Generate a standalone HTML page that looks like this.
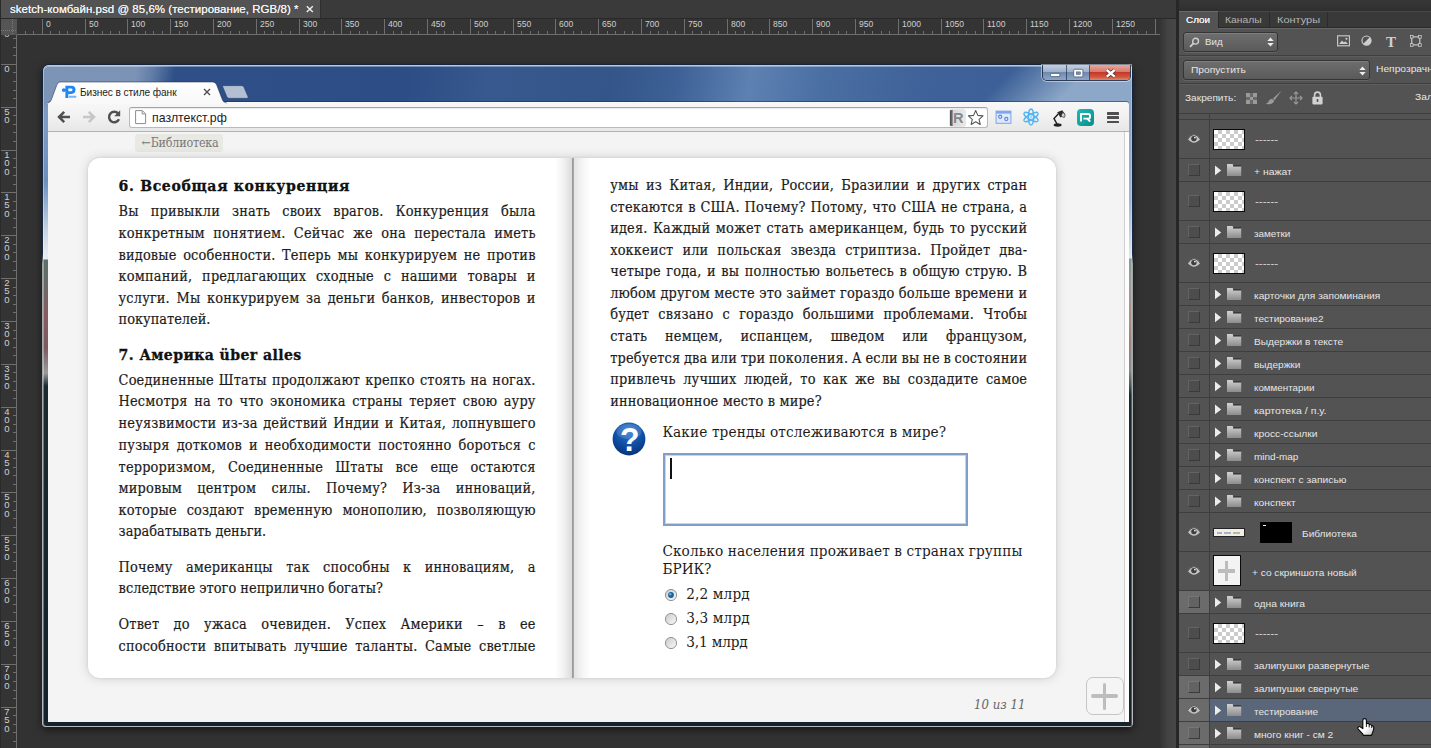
<!DOCTYPE html>
<html lang="ru"><head><meta charset="utf-8"><title>sketch-комбайн.psd</title>
<style>
html,body{margin:0;padding:0}
body{width:1431px;height:748px;overflow:hidden;position:relative;background:#323232;font-family:'Liberation Sans','DejaVu Sans',sans-serif;font-size:11px;color:#e6e6e6;-webkit-font-smoothing:antialiased}
.a{position:absolute}
.t{position:absolute;white-space:pre;line-height:1}
svg{position:absolute;overflow:visible}
</style></head><body>
<div class="a" style="left:0px;top:0px;width:1176px;height:18px;background:#3a3a3a"></div>
<div class="a" style="left:1px;top:0px;width:319px;height:18px;background:#535353"></div>
<div class="a" style="left:320px;top:0px;width:1px;height:18px;background:#2e2e2e"></div>
<div class="a" style="left:0px;top:18px;width:1176px;height:1px;background:#292929"></div>
<div class="t" style="left:10.00px;top:4.00px;font-family:'Liberation Sans','DejaVu Sans',sans-serif;font-size:11.5px;color:#f2f2f2;letter-spacing:0.029px;text-shadow:0 0 0.6px #f2f2f2;">sketch-комбайн.psd @ 85,6% (тестирование, RGB/8) *</div>
<svg style="left:305px;top:4px" width="10" height="10" viewBox="0 0 10 10"><path d="M1.8 2.2 L7.8 8 M7.8 2.2 L1.8 8" stroke="#f0f0f0" stroke-width="1.4" fill="none"/></svg>
<div class="a" style="left:0px;top:19px;width:1160px;height:16px;background:#343434"></div>
<div class="a" style="left:0px;top:35px;width:17px;height:713px;background:#343434"></div>
<div class="a" style="left:0px;top:0px;width:1px;height:748px;background:#2a2a2a"></div>
<div class="a" style="left:1px;top:19px;width:16px;height:16px;background:#555555"></div>
<svg style="left:1px;top:19px" width="16" height="16" viewBox="0 0 16 16"><path d="M11.5 0 V16 M0 11.5 H16" stroke="#7a7a7a" stroke-width="1" stroke-dasharray="1 1" fill="none"/></svg>
<svg style="left:0;top:19px" width="1160" height="16" viewBox="0 0 1160 16" shape-rendering="crispEdges"><rect x="17" y="15" width="1143" height="1" fill="#6f6f6f"/><rect x="25" y="12" width="1" height="4" fill="#6f6f6f"/><rect x="33" y="12" width="1" height="4" fill="#6f6f6f"/><rect x="42" y="0" width="1" height="16" fill="#6f6f6f"/><rect x="50" y="12" width="1" height="4" fill="#6f6f6f"/><rect x="59" y="12" width="1" height="4" fill="#6f6f6f"/><rect x="67" y="12" width="1" height="4" fill="#6f6f6f"/><rect x="76" y="12" width="1" height="4" fill="#6f6f6f"/><rect x="85" y="0" width="1" height="16" fill="#6f6f6f"/><rect x="93" y="12" width="1" height="4" fill="#6f6f6f"/><rect x="102" y="12" width="1" height="4" fill="#6f6f6f"/><rect x="110" y="12" width="1" height="4" fill="#6f6f6f"/><rect x="119" y="12" width="1" height="4" fill="#6f6f6f"/><rect x="127" y="0" width="1" height="16" fill="#6f6f6f"/><rect x="136" y="12" width="1" height="4" fill="#6f6f6f"/><rect x="145" y="12" width="1" height="4" fill="#6f6f6f"/><rect x="153" y="12" width="1" height="4" fill="#6f6f6f"/><rect x="162" y="12" width="1" height="4" fill="#6f6f6f"/><rect x="170" y="0" width="1" height="16" fill="#6f6f6f"/><rect x="179" y="12" width="1" height="4" fill="#6f6f6f"/><rect x="187" y="12" width="1" height="4" fill="#6f6f6f"/><rect x="196" y="12" width="1" height="4" fill="#6f6f6f"/><rect x="204" y="12" width="1" height="4" fill="#6f6f6f"/><rect x="213" y="0" width="1" height="16" fill="#6f6f6f"/><rect x="222" y="12" width="1" height="4" fill="#6f6f6f"/><rect x="230" y="12" width="1" height="4" fill="#6f6f6f"/><rect x="239" y="12" width="1" height="4" fill="#6f6f6f"/><rect x="247" y="12" width="1" height="4" fill="#6f6f6f"/><rect x="256" y="0" width="1" height="16" fill="#6f6f6f"/><rect x="264" y="12" width="1" height="4" fill="#6f6f6f"/><rect x="273" y="12" width="1" height="4" fill="#6f6f6f"/><rect x="281" y="12" width="1" height="4" fill="#6f6f6f"/><rect x="290" y="12" width="1" height="4" fill="#6f6f6f"/><rect x="299" y="0" width="1" height="16" fill="#6f6f6f"/><rect x="307" y="12" width="1" height="4" fill="#6f6f6f"/><rect x="316" y="12" width="1" height="4" fill="#6f6f6f"/><rect x="324" y="12" width="1" height="4" fill="#6f6f6f"/><rect x="333" y="12" width="1" height="4" fill="#6f6f6f"/><rect x="341" y="0" width="1" height="16" fill="#6f6f6f"/><rect x="350" y="12" width="1" height="4" fill="#6f6f6f"/><rect x="359" y="12" width="1" height="4" fill="#6f6f6f"/><rect x="367" y="12" width="1" height="4" fill="#6f6f6f"/><rect x="376" y="12" width="1" height="4" fill="#6f6f6f"/><rect x="384" y="0" width="1" height="16" fill="#6f6f6f"/><rect x="393" y="12" width="1" height="4" fill="#6f6f6f"/><rect x="401" y="12" width="1" height="4" fill="#6f6f6f"/><rect x="410" y="12" width="1" height="4" fill="#6f6f6f"/><rect x="418" y="12" width="1" height="4" fill="#6f6f6f"/><rect x="427" y="0" width="1" height="16" fill="#6f6f6f"/><rect x="436" y="12" width="1" height="4" fill="#6f6f6f"/><rect x="444" y="12" width="1" height="4" fill="#6f6f6f"/><rect x="453" y="12" width="1" height="4" fill="#6f6f6f"/><rect x="461" y="12" width="1" height="4" fill="#6f6f6f"/><rect x="470" y="0" width="1" height="16" fill="#6f6f6f"/><rect x="478" y="12" width="1" height="4" fill="#6f6f6f"/><rect x="487" y="12" width="1" height="4" fill="#6f6f6f"/><rect x="495" y="12" width="1" height="4" fill="#6f6f6f"/><rect x="504" y="12" width="1" height="4" fill="#6f6f6f"/><rect x="513" y="0" width="1" height="16" fill="#6f6f6f"/><rect x="521" y="12" width="1" height="4" fill="#6f6f6f"/><rect x="530" y="12" width="1" height="4" fill="#6f6f6f"/><rect x="538" y="12" width="1" height="4" fill="#6f6f6f"/><rect x="547" y="12" width="1" height="4" fill="#6f6f6f"/><rect x="555" y="0" width="1" height="16" fill="#6f6f6f"/><rect x="564" y="12" width="1" height="4" fill="#6f6f6f"/><rect x="573" y="12" width="1" height="4" fill="#6f6f6f"/><rect x="581" y="12" width="1" height="4" fill="#6f6f6f"/><rect x="590" y="12" width="1" height="4" fill="#6f6f6f"/><rect x="598" y="0" width="1" height="16" fill="#6f6f6f"/><rect x="607" y="12" width="1" height="4" fill="#6f6f6f"/><rect x="615" y="12" width="1" height="4" fill="#6f6f6f"/><rect x="624" y="12" width="1" height="4" fill="#6f6f6f"/><rect x="632" y="12" width="1" height="4" fill="#6f6f6f"/><rect x="641" y="0" width="1" height="16" fill="#6f6f6f"/><rect x="650" y="12" width="1" height="4" fill="#6f6f6f"/><rect x="658" y="12" width="1" height="4" fill="#6f6f6f"/><rect x="667" y="12" width="1" height="4" fill="#6f6f6f"/><rect x="675" y="12" width="1" height="4" fill="#6f6f6f"/><rect x="684" y="0" width="1" height="16" fill="#6f6f6f"/><rect x="692" y="12" width="1" height="4" fill="#6f6f6f"/><rect x="701" y="12" width="1" height="4" fill="#6f6f6f"/><rect x="709" y="12" width="1" height="4" fill="#6f6f6f"/><rect x="718" y="12" width="1" height="4" fill="#6f6f6f"/><rect x="727" y="0" width="1" height="16" fill="#6f6f6f"/><rect x="735" y="12" width="1" height="4" fill="#6f6f6f"/><rect x="744" y="12" width="1" height="4" fill="#6f6f6f"/><rect x="752" y="12" width="1" height="4" fill="#6f6f6f"/><rect x="761" y="12" width="1" height="4" fill="#6f6f6f"/><rect x="769" y="0" width="1" height="16" fill="#6f6f6f"/><rect x="778" y="12" width="1" height="4" fill="#6f6f6f"/><rect x="787" y="12" width="1" height="4" fill="#6f6f6f"/><rect x="795" y="12" width="1" height="4" fill="#6f6f6f"/><rect x="804" y="12" width="1" height="4" fill="#6f6f6f"/><rect x="812" y="0" width="1" height="16" fill="#6f6f6f"/><rect x="821" y="12" width="1" height="4" fill="#6f6f6f"/><rect x="829" y="12" width="1" height="4" fill="#6f6f6f"/><rect x="838" y="12" width="1" height="4" fill="#6f6f6f"/><rect x="846" y="12" width="1" height="4" fill="#6f6f6f"/><rect x="855" y="0" width="1" height="16" fill="#6f6f6f"/><rect x="864" y="12" width="1" height="4" fill="#6f6f6f"/><rect x="872" y="12" width="1" height="4" fill="#6f6f6f"/><rect x="881" y="12" width="1" height="4" fill="#6f6f6f"/><rect x="889" y="12" width="1" height="4" fill="#6f6f6f"/><rect x="898" y="0" width="1" height="16" fill="#6f6f6f"/><rect x="906" y="12" width="1" height="4" fill="#6f6f6f"/><rect x="915" y="12" width="1" height="4" fill="#6f6f6f"/><rect x="923" y="12" width="1" height="4" fill="#6f6f6f"/><rect x="932" y="12" width="1" height="4" fill="#6f6f6f"/><rect x="941" y="0" width="1" height="16" fill="#6f6f6f"/><rect x="949" y="12" width="1" height="4" fill="#6f6f6f"/><rect x="958" y="12" width="1" height="4" fill="#6f6f6f"/><rect x="966" y="12" width="1" height="4" fill="#6f6f6f"/><rect x="975" y="12" width="1" height="4" fill="#6f6f6f"/><rect x="983" y="0" width="1" height="16" fill="#6f6f6f"/><rect x="992" y="12" width="1" height="4" fill="#6f6f6f"/><rect x="1001" y="12" width="1" height="4" fill="#6f6f6f"/><rect x="1009" y="12" width="1" height="4" fill="#6f6f6f"/><rect x="1018" y="12" width="1" height="4" fill="#6f6f6f"/><rect x="1026" y="0" width="1" height="16" fill="#6f6f6f"/><rect x="1035" y="12" width="1" height="4" fill="#6f6f6f"/><rect x="1043" y="12" width="1" height="4" fill="#6f6f6f"/><rect x="1052" y="12" width="1" height="4" fill="#6f6f6f"/><rect x="1060" y="12" width="1" height="4" fill="#6f6f6f"/><rect x="1069" y="0" width="1" height="16" fill="#6f6f6f"/><rect x="1078" y="12" width="1" height="4" fill="#6f6f6f"/><rect x="1086" y="12" width="1" height="4" fill="#6f6f6f"/><rect x="1095" y="12" width="1" height="4" fill="#6f6f6f"/><rect x="1103" y="12" width="1" height="4" fill="#6f6f6f"/><rect x="1112" y="0" width="1" height="16" fill="#6f6f6f"/><rect x="1120" y="12" width="1" height="4" fill="#6f6f6f"/><rect x="1129" y="12" width="1" height="4" fill="#6f6f6f"/><rect x="1137" y="12" width="1" height="4" fill="#6f6f6f"/><rect x="1146" y="12" width="1" height="4" fill="#6f6f6f"/><rect x="1155" y="0" width="1" height="16" fill="#6f6f6f"/></svg>
<div class="t" style="left:45.60px;top:19.00px;font-family:'Liberation Sans','DejaVu Sans',sans-serif;font-size:9.5px;color:#cfcfcf;transform-origin:0 0;transform:scaleX(0.9000);">0</div>
<div class="t" style="left:88.60px;top:19.00px;font-family:'Liberation Sans','DejaVu Sans',sans-serif;font-size:9.5px;color:#cfcfcf;transform-origin:0 0;transform:scaleX(0.9000);">50</div>
<div class="t" style="left:130.60px;top:19.00px;font-family:'Liberation Sans','DejaVu Sans',sans-serif;font-size:9.5px;color:#cfcfcf;transform-origin:0 0;transform:scaleX(0.9000);">100</div>
<div class="t" style="left:173.60px;top:19.00px;font-family:'Liberation Sans','DejaVu Sans',sans-serif;font-size:9.5px;color:#cfcfcf;transform-origin:0 0;transform:scaleX(0.9000);">150</div>
<div class="t" style="left:216.60px;top:19.00px;font-family:'Liberation Sans','DejaVu Sans',sans-serif;font-size:9.5px;color:#cfcfcf;transform-origin:0 0;transform:scaleX(0.9000);">200</div>
<div class="t" style="left:259.60px;top:19.00px;font-family:'Liberation Sans','DejaVu Sans',sans-serif;font-size:9.5px;color:#cfcfcf;transform-origin:0 0;transform:scaleX(0.9000);">250</div>
<div class="t" style="left:302.60px;top:19.00px;font-family:'Liberation Sans','DejaVu Sans',sans-serif;font-size:9.5px;color:#cfcfcf;transform-origin:0 0;transform:scaleX(0.9000);">300</div>
<div class="t" style="left:344.60px;top:19.00px;font-family:'Liberation Sans','DejaVu Sans',sans-serif;font-size:9.5px;color:#cfcfcf;transform-origin:0 0;transform:scaleX(0.9000);">350</div>
<div class="t" style="left:387.60px;top:19.00px;font-family:'Liberation Sans','DejaVu Sans',sans-serif;font-size:9.5px;color:#cfcfcf;transform-origin:0 0;transform:scaleX(0.9000);">400</div>
<div class="t" style="left:430.60px;top:19.00px;font-family:'Liberation Sans','DejaVu Sans',sans-serif;font-size:9.5px;color:#cfcfcf;transform-origin:0 0;transform:scaleX(0.9000);">450</div>
<div class="t" style="left:473.60px;top:19.00px;font-family:'Liberation Sans','DejaVu Sans',sans-serif;font-size:9.5px;color:#cfcfcf;transform-origin:0 0;transform:scaleX(0.9000);">500</div>
<div class="t" style="left:516.60px;top:19.00px;font-family:'Liberation Sans','DejaVu Sans',sans-serif;font-size:9.5px;color:#cfcfcf;transform-origin:0 0;transform:scaleX(0.9000);">550</div>
<div class="t" style="left:558.60px;top:19.00px;font-family:'Liberation Sans','DejaVu Sans',sans-serif;font-size:9.5px;color:#cfcfcf;transform-origin:0 0;transform:scaleX(0.9000);">600</div>
<div class="t" style="left:601.60px;top:19.00px;font-family:'Liberation Sans','DejaVu Sans',sans-serif;font-size:9.5px;color:#cfcfcf;transform-origin:0 0;transform:scaleX(0.9000);">650</div>
<div class="t" style="left:644.60px;top:19.00px;font-family:'Liberation Sans','DejaVu Sans',sans-serif;font-size:9.5px;color:#cfcfcf;transform-origin:0 0;transform:scaleX(0.9000);">700</div>
<div class="t" style="left:687.60px;top:19.00px;font-family:'Liberation Sans','DejaVu Sans',sans-serif;font-size:9.5px;color:#cfcfcf;transform-origin:0 0;transform:scaleX(0.9000);">750</div>
<div class="t" style="left:730.60px;top:19.00px;font-family:'Liberation Sans','DejaVu Sans',sans-serif;font-size:9.5px;color:#cfcfcf;transform-origin:0 0;transform:scaleX(0.9000);">800</div>
<div class="t" style="left:772.60px;top:19.00px;font-family:'Liberation Sans','DejaVu Sans',sans-serif;font-size:9.5px;color:#cfcfcf;transform-origin:0 0;transform:scaleX(0.9000);">850</div>
<div class="t" style="left:815.60px;top:19.00px;font-family:'Liberation Sans','DejaVu Sans',sans-serif;font-size:9.5px;color:#cfcfcf;transform-origin:0 0;transform:scaleX(0.9000);">900</div>
<div class="t" style="left:858.60px;top:19.00px;font-family:'Liberation Sans','DejaVu Sans',sans-serif;font-size:9.5px;color:#cfcfcf;transform-origin:0 0;transform:scaleX(0.9000);">950</div>
<div class="t" style="left:901.60px;top:19.00px;font-family:'Liberation Sans','DejaVu Sans',sans-serif;font-size:9.5px;color:#cfcfcf;transform-origin:0 0;transform:scaleX(0.9000);">1000</div>
<div class="t" style="left:944.60px;top:19.00px;font-family:'Liberation Sans','DejaVu Sans',sans-serif;font-size:9.5px;color:#cfcfcf;transform-origin:0 0;transform:scaleX(0.9000);">1050</div>
<div class="t" style="left:986.60px;top:19.00px;font-family:'Liberation Sans','DejaVu Sans',sans-serif;font-size:9.5px;color:#cfcfcf;transform-origin:0 0;transform:scaleX(0.9000);">1100</div>
<div class="t" style="left:1029.60px;top:19.00px;font-family:'Liberation Sans','DejaVu Sans',sans-serif;font-size:9.5px;color:#cfcfcf;transform-origin:0 0;transform:scaleX(0.9000);">1150</div>
<div class="t" style="left:1072.60px;top:19.00px;font-family:'Liberation Sans','DejaVu Sans',sans-serif;font-size:9.5px;color:#cfcfcf;transform-origin:0 0;transform:scaleX(0.9000);">1200</div>
<div class="t" style="left:1115.60px;top:19.00px;font-family:'Liberation Sans','DejaVu Sans',sans-serif;font-size:9.5px;color:#cfcfcf;transform-origin:0 0;transform:scaleX(0.9000);">1250</div>
<svg style="left:0;top:35px" width="17" height="713" viewBox="0 0 17 713" shape-rendering="crispEdges"><rect x="16" y="0" width="1" height="713" fill="#6f6f6f"/><rect x="13" y="3" width="4" height="1" fill="#6f6f6f"/><rect x="13" y="12" width="4" height="1" fill="#6f6f6f"/><rect x="13" y="20" width="4" height="1" fill="#6f6f6f"/><rect x="1" y="29" width="16" height="1" fill="#6f6f6f"/><rect x="13" y="37" width="4" height="1" fill="#6f6f6f"/><rect x="13" y="46" width="4" height="1" fill="#6f6f6f"/><rect x="13" y="55" width="4" height="1" fill="#6f6f6f"/><rect x="13" y="63" width="4" height="1" fill="#6f6f6f"/><rect x="1" y="72" width="16" height="1" fill="#6f6f6f"/><rect x="13" y="80" width="4" height="1" fill="#6f6f6f"/><rect x="13" y="89" width="4" height="1" fill="#6f6f6f"/><rect x="13" y="97" width="4" height="1" fill="#6f6f6f"/><rect x="13" y="106" width="4" height="1" fill="#6f6f6f"/><rect x="1" y="115" width="16" height="1" fill="#6f6f6f"/><rect x="13" y="123" width="4" height="1" fill="#6f6f6f"/><rect x="13" y="132" width="4" height="1" fill="#6f6f6f"/><rect x="13" y="140" width="4" height="1" fill="#6f6f6f"/><rect x="13" y="149" width="4" height="1" fill="#6f6f6f"/><rect x="1" y="157" width="16" height="1" fill="#6f6f6f"/><rect x="13" y="166" width="4" height="1" fill="#6f6f6f"/><rect x="13" y="175" width="4" height="1" fill="#6f6f6f"/><rect x="13" y="183" width="4" height="1" fill="#6f6f6f"/><rect x="13" y="192" width="4" height="1" fill="#6f6f6f"/><rect x="1" y="200" width="16" height="1" fill="#6f6f6f"/><rect x="13" y="209" width="4" height="1" fill="#6f6f6f"/><rect x="13" y="217" width="4" height="1" fill="#6f6f6f"/><rect x="13" y="226" width="4" height="1" fill="#6f6f6f"/><rect x="13" y="235" width="4" height="1" fill="#6f6f6f"/><rect x="1" y="243" width="16" height="1" fill="#6f6f6f"/><rect x="13" y="252" width="4" height="1" fill="#6f6f6f"/><rect x="13" y="260" width="4" height="1" fill="#6f6f6f"/><rect x="13" y="269" width="4" height="1" fill="#6f6f6f"/><rect x="13" y="277" width="4" height="1" fill="#6f6f6f"/><rect x="1" y="286" width="16" height="1" fill="#6f6f6f"/><rect x="13" y="295" width="4" height="1" fill="#6f6f6f"/><rect x="13" y="303" width="4" height="1" fill="#6f6f6f"/><rect x="13" y="312" width="4" height="1" fill="#6f6f6f"/><rect x="13" y="320" width="4" height="1" fill="#6f6f6f"/><rect x="1" y="329" width="16" height="1" fill="#6f6f6f"/><rect x="13" y="337" width="4" height="1" fill="#6f6f6f"/><rect x="13" y="346" width="4" height="1" fill="#6f6f6f"/><rect x="13" y="355" width="4" height="1" fill="#6f6f6f"/><rect x="13" y="363" width="4" height="1" fill="#6f6f6f"/><rect x="1" y="372" width="16" height="1" fill="#6f6f6f"/><rect x="13" y="380" width="4" height="1" fill="#6f6f6f"/><rect x="13" y="389" width="4" height="1" fill="#6f6f6f"/><rect x="13" y="397" width="4" height="1" fill="#6f6f6f"/><rect x="13" y="406" width="4" height="1" fill="#6f6f6f"/><rect x="1" y="415" width="16" height="1" fill="#6f6f6f"/><rect x="13" y="423" width="4" height="1" fill="#6f6f6f"/><rect x="13" y="432" width="4" height="1" fill="#6f6f6f"/><rect x="13" y="440" width="4" height="1" fill="#6f6f6f"/><rect x="13" y="449" width="4" height="1" fill="#6f6f6f"/><rect x="1" y="457" width="16" height="1" fill="#6f6f6f"/><rect x="13" y="466" width="4" height="1" fill="#6f6f6f"/><rect x="13" y="475" width="4" height="1" fill="#6f6f6f"/><rect x="13" y="483" width="4" height="1" fill="#6f6f6f"/><rect x="13" y="492" width="4" height="1" fill="#6f6f6f"/><rect x="1" y="500" width="16" height="1" fill="#6f6f6f"/><rect x="13" y="509" width="4" height="1" fill="#6f6f6f"/><rect x="13" y="517" width="4" height="1" fill="#6f6f6f"/><rect x="13" y="526" width="4" height="1" fill="#6f6f6f"/><rect x="13" y="535" width="4" height="1" fill="#6f6f6f"/><rect x="1" y="543" width="16" height="1" fill="#6f6f6f"/><rect x="13" y="552" width="4" height="1" fill="#6f6f6f"/><rect x="13" y="560" width="4" height="1" fill="#6f6f6f"/><rect x="13" y="569" width="4" height="1" fill="#6f6f6f"/><rect x="13" y="577" width="4" height="1" fill="#6f6f6f"/><rect x="1" y="586" width="16" height="1" fill="#6f6f6f"/><rect x="13" y="595" width="4" height="1" fill="#6f6f6f"/><rect x="13" y="603" width="4" height="1" fill="#6f6f6f"/><rect x="13" y="612" width="4" height="1" fill="#6f6f6f"/><rect x="13" y="620" width="4" height="1" fill="#6f6f6f"/><rect x="1" y="629" width="16" height="1" fill="#6f6f6f"/><rect x="13" y="637" width="4" height="1" fill="#6f6f6f"/><rect x="13" y="646" width="4" height="1" fill="#6f6f6f"/><rect x="13" y="655" width="4" height="1" fill="#6f6f6f"/><rect x="13" y="663" width="4" height="1" fill="#6f6f6f"/><rect x="1" y="672" width="16" height="1" fill="#6f6f6f"/><rect x="13" y="680" width="4" height="1" fill="#6f6f6f"/><rect x="13" y="689" width="4" height="1" fill="#6f6f6f"/><rect x="13" y="697" width="4" height="1" fill="#6f6f6f"/><rect x="13" y="706" width="4" height="1" fill="#6f6f6f"/></svg>
<div class="a" style="left:1px;top:35px;width:15px;height:713px;overflow:hidden">
<div class="t" style="left:3.2px;top:-14.00px;font-size:9.5px;color:#cfcfcf">5</div><div class="t" style="left:3.2px;top:-6.00px;font-size:9.5px;color:#cfcfcf">0</div><div class="t" style="left:3.2px;top:29.00px;font-size:9.5px;color:#cfcfcf">0</div><div class="t" style="left:3.2px;top:72.00px;font-size:9.5px;color:#cfcfcf">5</div><div class="t" style="left:3.2px;top:80.00px;font-size:9.5px;color:#cfcfcf">0</div><div class="t" style="left:3.2px;top:115.00px;font-size:9.5px;color:#cfcfcf">1</div><div class="t" style="left:3.2px;top:123.00px;font-size:9.5px;color:#cfcfcf">0</div><div class="t" style="left:3.2px;top:132.00px;font-size:9.5px;color:#cfcfcf">0</div><div class="t" style="left:3.2px;top:157.00px;font-size:9.5px;color:#cfcfcf">1</div><div class="t" style="left:3.2px;top:165.00px;font-size:9.5px;color:#cfcfcf">5</div><div class="t" style="left:3.2px;top:174.00px;font-size:9.5px;color:#cfcfcf">0</div><div class="t" style="left:3.2px;top:200.00px;font-size:9.5px;color:#cfcfcf">2</div><div class="t" style="left:3.2px;top:208.00px;font-size:9.5px;color:#cfcfcf">0</div><div class="t" style="left:3.2px;top:217.00px;font-size:9.5px;color:#cfcfcf">0</div><div class="t" style="left:3.2px;top:243.00px;font-size:9.5px;color:#cfcfcf">2</div><div class="t" style="left:3.2px;top:251.00px;font-size:9.5px;color:#cfcfcf">5</div><div class="t" style="left:3.2px;top:260.00px;font-size:9.5px;color:#cfcfcf">0</div><div class="t" style="left:3.2px;top:286.00px;font-size:9.5px;color:#cfcfcf">3</div><div class="t" style="left:3.2px;top:294.00px;font-size:9.5px;color:#cfcfcf">0</div><div class="t" style="left:3.2px;top:303.00px;font-size:9.5px;color:#cfcfcf">0</div><div class="t" style="left:3.2px;top:329.00px;font-size:9.5px;color:#cfcfcf">3</div><div class="t" style="left:3.2px;top:337.00px;font-size:9.5px;color:#cfcfcf">5</div><div class="t" style="left:3.2px;top:346.00px;font-size:9.5px;color:#cfcfcf">0</div><div class="t" style="left:3.2px;top:372.00px;font-size:9.5px;color:#cfcfcf">4</div><div class="t" style="left:3.2px;top:380.00px;font-size:9.5px;color:#cfcfcf">0</div><div class="t" style="left:3.2px;top:389.00px;font-size:9.5px;color:#cfcfcf">0</div><div class="t" style="left:3.2px;top:415.00px;font-size:9.5px;color:#cfcfcf">4</div><div class="t" style="left:3.2px;top:423.00px;font-size:9.5px;color:#cfcfcf">5</div><div class="t" style="left:3.2px;top:432.00px;font-size:9.5px;color:#cfcfcf">0</div><div class="t" style="left:3.2px;top:457.00px;font-size:9.5px;color:#cfcfcf">5</div><div class="t" style="left:3.2px;top:465.00px;font-size:9.5px;color:#cfcfcf">0</div><div class="t" style="left:3.2px;top:474.00px;font-size:9.5px;color:#cfcfcf">0</div><div class="t" style="left:3.2px;top:500.00px;font-size:9.5px;color:#cfcfcf">5</div><div class="t" style="left:3.2px;top:508.00px;font-size:9.5px;color:#cfcfcf">5</div><div class="t" style="left:3.2px;top:517.00px;font-size:9.5px;color:#cfcfcf">0</div><div class="t" style="left:3.2px;top:543.00px;font-size:9.5px;color:#cfcfcf">6</div><div class="t" style="left:3.2px;top:551.00px;font-size:9.5px;color:#cfcfcf">0</div><div class="t" style="left:3.2px;top:560.00px;font-size:9.5px;color:#cfcfcf">0</div><div class="t" style="left:3.2px;top:586.00px;font-size:9.5px;color:#cfcfcf">6</div><div class="t" style="left:3.2px;top:594.00px;font-size:9.5px;color:#cfcfcf">5</div><div class="t" style="left:3.2px;top:603.00px;font-size:9.5px;color:#cfcfcf">0</div><div class="t" style="left:3.2px;top:629.00px;font-size:9.5px;color:#cfcfcf">7</div><div class="t" style="left:3.2px;top:637.00px;font-size:9.5px;color:#cfcfcf">0</div><div class="t" style="left:3.2px;top:646.00px;font-size:9.5px;color:#cfcfcf">0</div><div class="t" style="left:3.2px;top:672.00px;font-size:9.5px;color:#cfcfcf">7</div><div class="t" style="left:3.2px;top:680.00px;font-size:9.5px;color:#cfcfcf">5</div><div class="t" style="left:3.2px;top:689.00px;font-size:9.5px;color:#cfcfcf">0</div><div class="t" style="left:3.2px;top:715.00px;font-size:9.5px;color:#cfcfcf">8</div><div class="t" style="left:3.2px;top:723.00px;font-size:9.5px;color:#cfcfcf">0</div><div class="t" style="left:3.2px;top:732.00px;font-size:9.5px;color:#cfcfcf">0</div></div>
<div class="a" style="left:1160px;top:19px;width:16px;height:729px;background:linear-gradient(90deg,#333 0%,#3b3b3b 22%,#434343 50%,#474747 100%)"></div>
<div class="a" style="left:1176px;top:0px;width:3px;height:748px;background:#272727"></div>
<div class="a" style="left:42px;top:64px;width:1091px;height:663px;border-radius:7px 7px 4px 4px;background:linear-gradient(180deg,#16253f 0px,#1b2c48 190px,#9fa5a8 200px,#b9b9b9 100%);box-shadow:0 3px 9px rgba(0,0,0,.55)"></div>
<div class="a" style="left:43px;top:65px;width:1089px;height:661px;border-radius:6px 6px 3px 3px;background:linear-gradient(180deg,#7b93b5 0px,#7d9bc4 60px,#6a8fbf 116px,#c5d3e0 164px,#e8ecee 190px,#e8ecee 194px,#5a7068 195px,#6a6a68 222px,#8a5a60 251px,#7a5a60 283px,#9a9a9a 308px,#1a2a30 321px,#14222a 100%);box-shadow:inset 0 1px 0 rgba(255,255,255,.5),inset 1px 0 0 rgba(255,255,255,.35),inset -1px 0 0 rgba(255,255,255,.25)"></div>
<div class="a" style="left:1129px;top:65px;width:3px;height:661px;border-radius:0 6px 3px 0;background:linear-gradient(180deg,#8ca7c7 0px,#8ca7c7 60px,#9db5d2 135px,#d5e0ea 185px,#e0e6ea 193px,#8a9a94 194px,#a09a94 225px,#b08a84 255px,#9a807c 280px,#8a8a88 305px,#4a5a5a 320px,#1a2a30 330px,#14222a 100%);box-shadow:inset -1px 0 0 rgba(255,255,255,.25)"></div>
<div class="a" style="left:44px;top:66px;width:1087px;height:39px;border-radius:5px 5px 0 0;background:linear-gradient(135deg,rgba(140,167,199,0) 688px,rgba(140,167,199,1) 742px),linear-gradient(100deg,#7c94b6 0px,#7b93b5 92px,#5f7ba6 109px,#2e4f87 130px,#2c4d85 360px,#38598f 440px,#335588 560px,#3d6096 625px,#5d81b1 698px,#4a6fa3 768px,#3d6198 880px,#3a5f96 100%);box-shadow:inset 0 1px 0 rgba(255,255,255,.35)"></div>
<div class="a" style="left:1042px;top:65px;width:89px;height:16px;border-radius:0 0 5px 5px;border:1px solid rgba(20,30,50,.75);border-top:none;box-sizing:border-box;overflow:hidden;box-shadow:0 0 0 1px rgba(255,255,255,.45)"><div class="a" style="left:0;top:0;width:23px;height:15px;background:linear-gradient(180deg,#c3d0e2 0%,#9db0cc 45%,#6f89b0 50%,#8fa6c6 100%);border-right:1px solid rgba(20,30,50,.6)"></div><div class="a" style="left:24px;top:0;width:22px;height:15px;background:linear-gradient(180deg,#c3d0e2 0%,#9db0cc 45%,#6f89b0 50%,#8fa6c6 100%);border-right:1px solid rgba(20,30,50,.6)"></div><div class="a" style="left:47px;top:0;width:41px;height:15px;background:linear-gradient(180deg,#e8a99c 0%,#d9786a 45%,#c2392a 50%,#d2563f 80%,#e08a6a 100%)"></div></div>
<svg style="left:1042px;top:64.5px" width="89" height="17" viewBox="0 0 89 17"><rect x="8.6" y="8.4" width="9.2" height="3.2" rx="0.8" fill="#fff" stroke="#4b5a74" stroke-width="0.8"/><rect x="31.7" y="4.3" width="9.2" height="7.6" rx="0.8" fill="#fff" stroke="#4b5a74" stroke-width="0.8"/><rect x="34.4" y="6.9" width="3.9" height="2.5" fill="#7a8fb2" stroke="#4b5a74" stroke-width="0.6"/><path d="M64.8 5 L72.6 11.6 M72.6 5 L64.8 11.6" stroke="#5a2a26" stroke-width="3.9" fill="none"/><path d="M64.8 5 L72.6 11.6 M72.6 5 L64.8 11.6" stroke="#fff" stroke-width="2.5" fill="none"/></svg>
<svg style="left:221.4px;top:85.2px" width="29.6" height="14.8" viewBox="0 0 28 14"><path d="M1.5 1.2 Q1 0.6 2.2 0.6 H19.5 Q21 0.6 21.6 2 L25.6 11.4 Q26 12.6 24.6 12.6 H7.6 Q6.2 12.6 5.6 11.2 Z" fill="#b3bfd2" stroke="rgba(40,60,100,.55)" stroke-width="0.8"/></svg>
<div class="a" style="left:48px;top:102px;width:1081px;height:30px;border-radius:3px 3px 0 0;background:linear-gradient(180deg,#f8f8f8 0%,#f1f1f1 50%,#e7e7e7 100%);border-bottom:1px solid #b4b4b4;box-sizing:border-box;box-shadow:0 -1px 0 rgba(30,45,80,.55)"></div>
<svg style="left:44px;top:80px" width="190" height="24" viewBox="0 0 190 24"><defs><linearGradient id="tg" x1="0" y1="0" x2="0" y2="1"><stop offset="0" stop-color="#ffffff"/><stop offset="1" stop-color="#f8f8f8"/></linearGradient></defs><path d="M3.5 23 C6.5 22.5 7 20.5 7.8 18.5 L12.6 5.6 C13.4 3.2 14.4 2 17 2 H168.3 C170.9 2 171.9 3.2 172.9 5.6 L177.9 18.5 C178.7 20.5 179.3 22.5 182.8 23 V24 H3.5 Z" fill="url(#tg)"/><path d="M3.5 23 C6.5 22.5 7 20.5 7.8 18.5 L12.6 5.6 C13.4 3.2 14.4 2 17 2 H168.3 C170.9 2 171.9 3.2 172.9 5.6 L177.9 18.5 C178.7 20.5 179.3 22.5 182.8 23" fill="none" stroke="rgba(30,45,80,.6)" stroke-width="0.9"/></svg>
<svg style="left:61px;top:84px" width="17" height="16" viewBox="0 0 17 16"><path d="M4.4 1.7 H10.4 A4.1 4.1 0 0 1 10.4 9.9 H7.3 V14 H4.4 Z M7.3 4.4 V7.2 H10.1 A1.4 1.4 0 0 0 10.1 4.4 Z" fill="#1f86f4" fill-rule="evenodd"/><circle cx="2.8" cy="6.1" r="1.9" fill="#1f86f4"/><rect x="3" y="5.1" width="2.4" height="2" fill="#1f86f4"/><rect x="7.8" y="11.7" width="7.4" height="2.1" rx="0.5" fill="#5ea9f7" opacity="0.85"/></svg>
<div class="t" style="left:79.50px;top:86.00px;font-family:'Liberation Sans','DejaVu Sans',sans-serif;font-size:11.6px;color:#1e1e1e;letter-spacing:-0.100px;transform-origin:0 0;transform:scaleX(0.8754);">Бизнес в стиле фанк</div>
<svg style="left:202.2px;top:87.1px" width="10" height="10" viewBox="0 0 10 10"><path d="M2 2 L8 8 M8 2 L2 8" stroke="#4d4d4d" stroke-width="1.35" fill="none"/></svg>
<svg style="left:56px;top:109px" width="16" height="16" viewBox="0 0 16 16"><path d="M14 8 H4 M8.2 2.8 L3 8 L8.2 13.2" stroke="#505050" stroke-width="2.5" fill="none" stroke-linejoin="miter"/></svg>
<svg style="left:81px;top:109px" width="16" height="16" viewBox="0 0 16 16"><path d="M2 8 H12 M7.8 2.8 L13 8 L7.8 13.2" stroke="#c6c6c6" stroke-width="2.5" fill="none" stroke-linejoin="miter"/></svg>
<svg style="left:106px;top:109px" width="16" height="16" viewBox="0 0 16 16"><path d="M12.2 4.6 A5.2 5.2 0 1 0 13 10.2" stroke="#505050" stroke-width="2.4" fill="none"/><path d="M14.2 1.2 V7.2 H8.2 Z" fill="#505050"/></svg>
<div class="a" style="left:129px;top:107px;width:859px;height:21px;box-sizing:border-box;background:#fff;border:1px solid #b9b9b9;border-top-color:#a3a3a3;border-radius:3px;box-shadow:inset 0 1px 1px rgba(0,0,0,.08)"></div>
<svg style="left:135px;top:110px" width="12" height="15" viewBox="0 0 12 15"><path d="M0.6 0.6 H7.4 L10.6 3.8 V13.6 H0.6 Z" fill="#fff" stroke="#8c8c8c" stroke-width="1"/><path d="M7.2 0.8 V4 H10.4" fill="#e8e8e8" stroke="#8c8c8c" stroke-width="0.9"/></svg>
<div class="t" style="left:152.00px;top:111.00px;font-family:'Liberation Sans','DejaVu Sans',sans-serif;font-size:13.5px;color:#1c1c1c;transform-origin:0 0;transform:scaleX(0.9124);">пазлтекст.рф</div>
<div class="a" style="left:950px;top:109.7px;width:14.6px;height:16px;border-radius:1px;background:linear-gradient(90deg,#4a4a4a 0,#6f6f6f 2px,#d9d9d9 3.5px,#e9e9e9 100%);box-shadow:0 0 0 0.5px #cfcfcf"></div>
<div class="t" style="left:953.40px;top:110.00px;font-family:'Liberation Sans','DejaVu Sans',sans-serif;font-size:15px;font-weight:bold;color:#858585;transform-origin:0 0;transform:scaleX(0.9775);text-shadow:0 0 1px #fff;">R</div>
<div class="a" style="left:954.2px;top:112.6px;width:2.2px;height:2.2px;background:#b07fd0;border-radius:1px"></div>
<svg style="left:967.4px;top:108.8px" width="17.4" height="17.4" viewBox="0 0 18 18"><path d="M9 1.6 L11.2 6.6 L16.6 7.1 L12.5 10.7 L13.7 16 L9 13.2 L4.3 16 L5.5 10.7 L1.4 7.1 L6.8 6.6 Z" fill="#fff" stroke="#555" stroke-width="1.1" stroke-linejoin="round"/></svg>
<svg style="left:995px;top:110.3px" width="17" height="15" viewBox="0 0 17 16"><rect x="0.6" y="1.2" width="15.8" height="13" fill="#dfe9fb" stroke="#7fa4e8" stroke-width="1.1"/><rect x="0.6" y="1.2" width="15.8" height="2.6" fill="#7fa4e8"/><circle cx="5" cy="7.2" r="1.7" fill="none" stroke="#5b86dc" stroke-width="1.2"/><circle cx="11.5" cy="9.6" r="1.7" fill="none" stroke="#5b86dc" stroke-width="1.2"/></svg>
<svg style="left:1022px;top:108px" width="18" height="18" viewBox="0 0 18 18" fill="none" stroke="#54b4f2" stroke-width="1.3"><ellipse cx="9" cy="9" rx="2.7" ry="8" /><ellipse cx="9" cy="9" rx="2.7" ry="8" transform="rotate(60 9 9)"/><ellipse cx="9" cy="9" rx="2.7" ry="8" transform="rotate(120 9 9)"/><circle cx="9" cy="9" r="1.4" fill="#9fd8fb" stroke="none"/></svg>
<svg style="left:1050px;top:108.6px" width="18" height="19" viewBox="0 0 18 19"><path d="M7.2 3.2 L12.2 1.2 L15.4 5.4 L10.4 8.4 Z" fill="#2a2a2a"/><path d="M12.4 3.6 A3 3 0 0 1 14.4 8.4 L11 7.4 Z" fill="#d8d8d8" stroke="#2a2a2a" stroke-width="0.7"/><path d="M8.2 5 L4 9.6 L7 15" stroke="#222" stroke-width="1.5" fill="none"/><ellipse cx="7.6" cy="16" rx="4" ry="1.7" fill="#222"/></svg>
<div class="a" style="left:1077px;top:109px;width:17px;height:17px;border-radius:4px;background:linear-gradient(135deg,#1fb9b4 0%,#12a09c 60%,#0b8a87 100%)"></div>
<svg style="left:1077px;top:109px" width="17" height="17" viewBox="0 0 17 17"><path d="M4 12.4 V5 H11.4 Q13 5 13 6.6 V8 Q13 9.6 11.4 9.6 H6.4 M10.4 9.8 L13.2 12.6" stroke="#fff" stroke-width="1.9" fill="none" stroke-linejoin="round"/></svg>
<div class="a" style="left:1107px;top:112.0px;width:12px;height:2.7px;background:#4f4f4f;border-radius:0.5px"></div>
<div class="a" style="left:1107px;top:116.4px;width:12px;height:2.7px;background:#4f4f4f;border-radius:0.5px"></div>
<div class="a" style="left:1107px;top:120.8px;width:12px;height:2.7px;background:#4f4f4f;border-radius:0.5px"></div>
<div class="a" style="left:48px;top:132px;width:1081px;height:590px;background:#f4f4f4"></div>
<div class="a" style="left:1124px;top:132px;width:5px;height:590px;background:#fdfdfd;border-left:1px solid #cfcfcf;box-sizing:border-box"></div>
<div class="a" style="left:135px;top:134px;width:88px;height:18px;background:#e9e9e3;border-radius:3px"></div>
<div class="t" style="left:141.50px;top:137.00px;font-family:'DejaVu Serif Condensed','DejaVu Serif','Liberation Serif',serif;font-size:12.4px;color:#777;letter-spacing:-0.206px;">←Библиотека</div>
<div class="a" style="left:88.3px;top:158.3px;width:967.7px;height:519.7px;border-radius:12px;background:#fff;box-shadow:0 0 12px rgba(0,0,0,.16),0 0 3px rgba(0,0,0,.09)"></div>
<div class="a" style="left:555px;top:158px;width:17px;height:520px;background:linear-gradient(90deg,rgba(0,0,0,0) 0%,rgba(0,0,0,.05) 50%,rgba(0,0,0,.14) 100%)"></div>
<div class="a" style="left:572px;top:158px;width:2px;height:520px;background:linear-gradient(90deg,#969696,#adadad)"></div>
<div class="a" style="left:574px;top:158px;width:17px;height:520px;background:linear-gradient(90deg,rgba(0,0,0,.11) 0%,rgba(0,0,0,.04) 50%,rgba(0,0,0,0) 100%)"></div>
<div class="t" style="left:118.60px;top:178.00px;font-family:'DejaVu Serif Condensed','DejaVu Serif','Liberation Serif',serif;font-size:15.6px;font-weight:bold;color:#111;letter-spacing:0.670px;-webkit-text-stroke:0.3px #111;">6. Всеобщая конкуренция</div>
<div class="t" style="left:118.60px;top:204.00px;font-family:'DejaVu Serif Condensed','DejaVu Serif','Liberation Serif',serif;font-size:14.4px;color:#1c1c1c;letter-spacing:0.150px;word-spacing:7.701px;-webkit-text-stroke:0.18px #1c1c1c;">Вы привыкли знать своих врагов. Конкуренция была</div>
<div class="t" style="left:118.60px;top:226.00px;font-family:'DejaVu Serif Condensed','DejaVu Serif','Liberation Serif',serif;font-size:14.4px;color:#1c1c1c;letter-spacing:0.150px;word-spacing:4.164px;-webkit-text-stroke:0.18px #1c1c1c;">конкретным понятием. Сейчас же она перестала иметь</div>
<div class="t" style="left:118.60px;top:248.00px;font-family:'DejaVu Serif Condensed','DejaVu Serif','Liberation Serif',serif;font-size:14.4px;color:#1c1c1c;letter-spacing:0.150px;word-spacing:2.330px;-webkit-text-stroke:0.18px #1c1c1c;">видовые особенности. Теперь мы конкурируем не против</div>
<div class="t" style="left:118.60px;top:269.00px;font-family:'DejaVu Serif Condensed','DejaVu Serif','Liberation Serif',serif;font-size:14.4px;color:#1c1c1c;letter-spacing:0.150px;word-spacing:5.597px;-webkit-text-stroke:0.18px #1c1c1c;">компаний, предлагающих сходные с нашими товары и</div>
<div class="t" style="left:118.60px;top:291.00px;font-family:'DejaVu Serif Condensed','DejaVu Serif','Liberation Serif',serif;font-size:14.4px;color:#1c1c1c;letter-spacing:0.150px;word-spacing:2.342px;-webkit-text-stroke:0.18px #1c1c1c;">услуги. Мы конкурируем за деньги банков, инвесторов и</div>
<div class="t" style="left:118.60px;top:312.00px;font-family:'DejaVu Serif Condensed','DejaVu Serif','Liberation Serif',serif;font-size:14.4px;color:#1c1c1c;letter-spacing:-0.010px;-webkit-text-stroke:0.18px #1c1c1c;">покупателей.</div>
<div class="t" style="left:118.60px;top:347.00px;font-family:'DejaVu Serif Condensed','DejaVu Serif','Liberation Serif',serif;font-size:15.6px;font-weight:bold;color:#111;letter-spacing:0.420px;-webkit-text-stroke:0.3px #111;">7. Америка über alles</div>
<div class="t" style="left:118.60px;top:373.00px;font-family:'DejaVu Serif Condensed','DejaVu Serif','Liberation Serif',serif;font-size:14.4px;color:#1c1c1c;letter-spacing:0.150px;word-spacing:0.898px;-webkit-text-stroke:0.18px #1c1c1c;">Соединенные Штаты продолжают крепко стоять на ногах.</div>
<div class="t" style="left:118.60px;top:394.00px;font-family:'DejaVu Serif Condensed','DejaVu Serif','Liberation Serif',serif;font-size:14.4px;color:#1c1c1c;letter-spacing:0.150px;word-spacing:2.435px;-webkit-text-stroke:0.18px #1c1c1c;">Несмотря на то что экономика страны теряет свою ауру</div>
<div class="t" style="left:118.60px;top:416.00px;font-family:'DejaVu Serif Condensed','DejaVu Serif','Liberation Serif',serif;font-size:14.4px;color:#1c1c1c;letter-spacing:0.150px;word-spacing:1.394px;-webkit-text-stroke:0.18px #1c1c1c;">неуязвимости из-за действий Индии и Китая, лопнувшего</div>
<div class="t" style="left:118.60px;top:438.00px;font-family:'DejaVu Serif Condensed','DejaVu Serif','Liberation Serif',serif;font-size:14.4px;color:#1c1c1c;letter-spacing:0.150px;word-spacing:2.838px;-webkit-text-stroke:0.18px #1c1c1c;">пузыря доткомов и необходимости постоянно бороться с</div>
<div class="t" style="left:118.60px;top:460.00px;font-family:'DejaVu Serif Condensed','DejaVu Serif','Liberation Serif',serif;font-size:14.4px;color:#1c1c1c;letter-spacing:0.150px;word-spacing:8.056px;-webkit-text-stroke:0.18px #1c1c1c;">терроризмом, Соединенные Штаты все еще остаются</div>
<div class="t" style="left:118.60px;top:481.00px;font-family:'DejaVu Serif Condensed','DejaVu Serif','Liberation Serif',serif;font-size:14.4px;color:#1c1c1c;letter-spacing:0.150px;word-spacing:10.970px;-webkit-text-stroke:0.18px #1c1c1c;">мировым центром силы. Почему? Из-за инноваций,</div>
<div class="t" style="left:118.60px;top:503.00px;font-family:'DejaVu Serif Condensed','DejaVu Serif','Liberation Serif',serif;font-size:14.4px;color:#1c1c1c;letter-spacing:0.150px;word-spacing:5.712px;-webkit-text-stroke:0.18px #1c1c1c;">которые создают временную монополию, позволяющую</div>
<div class="t" style="left:118.60px;top:524.00px;font-family:'DejaVu Serif Condensed','DejaVu Serif','Liberation Serif',serif;font-size:14.4px;color:#1c1c1c;letter-spacing:-0.015px;-webkit-text-stroke:0.18px #1c1c1c;">зарабатывать деньги.</div>
<div class="t" style="left:118.60px;top:560.00px;font-family:'DejaVu Serif Condensed','DejaVu Serif','Liberation Serif',serif;font-size:14.4px;color:#1c1c1c;letter-spacing:0.150px;word-spacing:9.134px;-webkit-text-stroke:0.18px #1c1c1c;">Почему американцы так способны к инновациям, а</div>
<div class="t" style="left:118.60px;top:581.00px;font-family:'DejaVu Serif Condensed','DejaVu Serif','Liberation Serif',serif;font-size:14.4px;color:#1c1c1c;letter-spacing:0.022px;-webkit-text-stroke:0.18px #1c1c1c;">вследствие этого неприлично богаты?</div>
<div class="t" style="left:118.60px;top:617.00px;font-family:'DejaVu Serif Condensed','DejaVu Serif','Liberation Serif',serif;font-size:14.4px;color:#1c1c1c;letter-spacing:0.150px;word-spacing:10.096px;-webkit-text-stroke:0.18px #1c1c1c;">Ответ до ужаса очевиден. Успех Америки – в ее</div>
<div class="t" style="left:118.60px;top:639.00px;font-family:'DejaVu Serif Condensed','DejaVu Serif','Liberation Serif',serif;font-size:14.4px;color:#1c1c1c;letter-spacing:0.150px;word-spacing:3.329px;-webkit-text-stroke:0.18px #1c1c1c;">способности впитывать лучшие таланты. Самые светлые</div>
<div class="t" style="left:610.20px;top:178.00px;font-family:'DejaVu Serif Condensed','DejaVu Serif','Liberation Serif',serif;font-size:14.4px;color:#1c1c1c;letter-spacing:0.150px;word-spacing:3.033px;-webkit-text-stroke:0.18px #1c1c1c;">умы из Китая, Индии, России, Бразилии и других стран</div>
<div class="t" style="left:610.20px;top:200.00px;font-family:'DejaVu Serif Condensed','DejaVu Serif','Liberation Serif',serif;font-size:14.4px;color:#1c1c1c;letter-spacing:0.150px;word-spacing:0.644px;-webkit-text-stroke:0.18px #1c1c1c;">стекаются в США. Почему? Потому, что США не страна, а</div>
<div class="t" style="left:610.20px;top:221.00px;font-family:'DejaVu Serif Condensed','DejaVu Serif','Liberation Serif',serif;font-size:14.4px;color:#1c1c1c;letter-spacing:0.150px;word-spacing:1.166px;-webkit-text-stroke:0.18px #1c1c1c;">идея. Каждый может стать американцем, будь то русский</div>
<div class="t" style="left:610.20px;top:243.00px;font-family:'DejaVu Serif Condensed','DejaVu Serif','Liberation Serif',serif;font-size:14.4px;color:#1c1c1c;letter-spacing:0.150px;word-spacing:4.773px;-webkit-text-stroke:0.18px #1c1c1c;">хоккеист или польская звезда стриптиза. Пройдет два-</div>
<div class="t" style="left:610.20px;top:264.00px;font-family:'DejaVu Serif Condensed','DejaVu Serif','Liberation Serif',serif;font-size:14.4px;color:#1c1c1c;letter-spacing:0.150px;word-spacing:1.305px;-webkit-text-stroke:0.18px #1c1c1c;">четыре года, и вы полностью вольетесь в общую струю. В</div>
<div class="t" style="left:610.20px;top:286.00px;font-family:'DejaVu Serif Condensed','DejaVu Serif','Liberation Serif',serif;font-size:14.4px;color:#1c1c1c;letter-spacing:0.150px;word-spacing:0.157px;-webkit-text-stroke:0.18px #1c1c1c;">любом другом месте это займет гораздо больше времени и</div>
<div class="t" style="left:610.20px;top:307.00px;font-family:'DejaVu Serif Condensed','DejaVu Serif','Liberation Serif',serif;font-size:14.4px;color:#1c1c1c;letter-spacing:0.150px;word-spacing:4.971px;-webkit-text-stroke:0.18px #1c1c1c;">будет связано с гораздо большими проблемами. Чтобы</div>
<div class="t" style="left:610.20px;top:329.00px;font-family:'DejaVu Serif Condensed','DejaVu Serif','Liberation Serif',serif;font-size:14.4px;color:#1c1c1c;letter-spacing:0.150px;word-spacing:13.556px;-webkit-text-stroke:0.18px #1c1c1c;">стать немцем, испанцем, шведом или французом,</div>
<div class="t" style="left:610.20px;top:351.00px;font-family:'DejaVu Serif Condensed','DejaVu Serif','Liberation Serif',serif;font-size:14.4px;color:#1c1c1c;letter-spacing:0.150px;word-spacing:-0.569px;-webkit-text-stroke:0.18px #1c1c1c;">требуется два или три поколения. А если вы не в состоянии</div>
<div class="t" style="left:610.20px;top:372.00px;font-family:'DejaVu Serif Condensed','DejaVu Serif','Liberation Serif',serif;font-size:14.4px;color:#1c1c1c;letter-spacing:0.150px;word-spacing:3.276px;-webkit-text-stroke:0.18px #1c1c1c;">привлечь лучших людей, то как же вы создадите самое</div>
<div class="t" style="left:610.20px;top:394.00px;font-family:'DejaVu Serif Condensed','DejaVu Serif','Liberation Serif',serif;font-size:14.4px;color:#1c1c1c;letter-spacing:0.160px;-webkit-text-stroke:0.18px #1c1c1c;">инновационное место в мире?</div>
<svg style="left:612px;top:422px" width="34" height="34" viewBox="0 0 34 34"><defs><radialGradient id="qg" cx="0.5" cy="0.25" r="0.8"><stop offset="0" stop-color="#2f79cf"/><stop offset="0.55" stop-color="#0f4fa6"/><stop offset="1" stop-color="#06306f"/></radialGradient></defs><circle cx="17" cy="17" r="16.4" fill="url(#qg)"/><ellipse cx="17" cy="9.5" rx="12.5" ry="7.5" fill="rgba(255,255,255,.14)"/></svg>
<div class="t" style="left:619.60px;top:423.00px;font-family:'Liberation Sans','DejaVu Sans',sans-serif;font-size:33px;font-weight:bold;color:#fff;transform-origin:0 0;transform:scaleX(0.9667);">?</div>
<div class="t" style="left:662.40px;top:425.00px;font-family:'DejaVu Serif Condensed','DejaVu Serif','Liberation Serif',serif;font-size:15.2px;color:#1c1c1c;letter-spacing:0.124px;">Какие тренды отслеживаются в мире?</div>
<div class="a" style="left:663px;top:453px;width:305px;height:73px;box-sizing:border-box;background:#fff;border:2px solid #7e9fc9;box-shadow:inset 0 0 0 1px #c5d5ea"></div>
<div class="a" style="left:670.4px;top:457.5px;width:1.4px;height:21px;background:#111"></div>
<div class="t" style="left:662.40px;top:544.00px;font-family:'DejaVu Serif Condensed','DejaVu Serif','Liberation Serif',serif;font-size:15.2px;color:#1c1c1c;letter-spacing:0.105px;">Сколько населения проживает в странах группы</div>
<div class="t" style="left:662.40px;top:562.00px;font-family:'DejaVu Serif Condensed','DejaVu Serif','Liberation Serif',serif;font-size:15.2px;color:#1c1c1c;">БРИК?</div>
<svg style="left:663.7px;top:588.0px" width="14" height="14" viewBox="0 0 14 14"><defs><linearGradient id="rg0" x1="0" y1="0" x2="1" y2="1"><stop offset="0" stop-color="#c9c9c9"/><stop offset="1" stop-color="#fbfbfb"/></linearGradient></defs><circle cx="7" cy="7" r="5.6" fill="url(#rg0)" stroke="#949494" stroke-width="1"/><circle cx="7" cy="7" r="2.9" fill="#14629f"/><circle cx="6.3" cy="6.3" r="1.2" fill="#5fb0e6"/></svg>
<div class="t" style="left:686.20px;top:587.00px;font-family:'DejaVu Serif Condensed','DejaVu Serif','Liberation Serif',serif;font-size:15.2px;color:#1c1c1c;letter-spacing:0.148px;">2,2 млрд</div>
<svg style="left:663.7px;top:611.8px" width="14" height="14" viewBox="0 0 14 14"><defs><linearGradient id="rg1" x1="0" y1="0" x2="1" y2="1"><stop offset="0" stop-color="#c9c9c9"/><stop offset="1" stop-color="#fbfbfb"/></linearGradient></defs><circle cx="7" cy="7" r="5.6" fill="url(#rg1)" stroke="#949494" stroke-width="1"/></svg>
<div class="t" style="left:686.20px;top:611.00px;font-family:'DejaVu Serif Condensed','DejaVu Serif','Liberation Serif',serif;font-size:15.2px;color:#1c1c1c;letter-spacing:0.148px;">3,3 млрд</div>
<svg style="left:663.7px;top:635.6px" width="14" height="14" viewBox="0 0 14 14"><defs><linearGradient id="rg2" x1="0" y1="0" x2="1" y2="1"><stop offset="0" stop-color="#c9c9c9"/><stop offset="1" stop-color="#fbfbfb"/></linearGradient></defs><circle cx="7" cy="7" r="5.6" fill="url(#rg2)" stroke="#949494" stroke-width="1"/></svg>
<div class="t" style="left:686.20px;top:635.00px;font-family:'DejaVu Serif Condensed','DejaVu Serif','Liberation Serif',serif;font-size:15.2px;color:#1c1c1c;letter-spacing:-0.139px;">3,1 млрд</div>
<div class="t" style="left:974.00px;top:698.00px;font-family:'DejaVu Serif Condensed','DejaVu Serif','Liberation Serif',serif;font-size:13px;font-style:italic;color:#666;letter-spacing:0.036px;">10 из 11</div>
<div class="a" style="left:1086px;top:677px;width:38px;height:38px;box-sizing:border-box;border:1px solid #c6c6c6;border-radius:7px;background:#f5f5f5"></div>
<div class="a" style="left:1091px;top:694.3px;width:27px;height:3.6px;background:#bdbdbd;border-radius:2px"></div>
<div class="a" style="left:1102.7px;top:683px;width:3.6px;height:27px;background:#bdbdbd;border-radius:2px"></div>
<div class="a" style="left:1179px;top:0px;width:252px;height:748px;background:#535353"></div>
<div class="a" style="left:1179px;top:0px;width:252px;height:11px;background:linear-gradient(180deg,#373737 0%,#333 50%,#2f2f2f 100%)"></div>
<div class="a" style="left:1179px;top:11px;width:252px;height:17px;background:#393939;border-top:1px solid #474747;border-bottom:1px solid #2b2b2b;box-sizing:border-box"></div>
<div class="a" style="left:1219px;top:28px;width:212px;height:1px;background:#656565"></div>
<div class="a" style="left:1179px;top:11px;width:40px;height:17px;background:#535353;border-top:1px solid #6a6a6a;border-right:1px solid #2b2b2b;box-sizing:border-box"></div>
<div class="a" style="left:1269px;top:12px;width:1px;height:15px;background:#2b2b2b"></div>
<div class="a" style="left:1327px;top:12px;width:1px;height:15px;background:#2b2b2b"></div>
<div class="t" style="left:1186.00px;top:15.00px;font-family:'Liberation Sans','DejaVu Sans',sans-serif;font-size:9.7px;color:#f4f4f4;transform-origin:0 0;transform:scaleX(1.0186);text-shadow:0 0 0.5px #f4f4f4;">Слои</div>
<div class="t" style="left:1225.20px;top:15.00px;font-family:'Liberation Sans','DejaVu Sans',sans-serif;font-size:9.7px;color:#b4b4b4;transform-origin:0 0;transform:scaleX(1.0701);">Каналы</div>
<div class="t" style="left:1277.40px;top:15.00px;font-family:'Liberation Sans','DejaVu Sans',sans-serif;font-size:9.7px;color:#b4b4b4;transform-origin:0 0;transform:scaleX(1.1337);">Контуры</div>
<div class="a" style="left:1183px;top:32px;width:95px;height:20px;background:linear-gradient(180deg,#6e6e6e 0%,#646464 50%,#5a5a5a 100%);border:1px solid #353535;border-radius:3px;box-sizing:border-box;box-shadow:0 1px 0 rgba(255,255,255,.10),inset 0 1px 0 rgba(255,255,255,.12)"></div>
<svg style="left:1189px;top:37px" width="11" height="11" viewBox="0 0 11 11"><circle cx="6.6" cy="4.2" r="2.9" fill="none" stroke="#d0d0d0" stroke-width="1.4"/><path d="M4.4 6.4 L1 9.8" stroke="#d0d0d0" stroke-width="1.8"/></svg>
<div class="t" style="left:1205.00px;top:37.00px;font-family:'Liberation Sans','DejaVu Sans',sans-serif;font-size:9.7px;color:#e6e6e6;transform-origin:0 0;transform:scaleX(1.0039);">Вид</div>
<svg style="left:1267px;top:37px" width="7" height="10" viewBox="0 0 7 10"><path d="M0.3 4 L3.5 0.4 L6.7 4 Z M0.3 6 L3.5 9.6 L6.7 6 Z" fill="#ededed"/></svg>
<svg style="left:1337px;top:35px" width="13.4" height="12" viewBox="0 0 15 13"><rect x="0.7" y="0.7" width="13.2" height="11.2" fill="none" stroke="#d0d0d0" stroke-width="1.2"/><path d="M2.4 10 L5.6 5.8 L7.8 8.2 L9.4 6.8 L12.2 10 Z" fill="#d0d0d0"/><circle cx="10.6" cy="4" r="1.2" fill="#d0d0d0"/></svg>
<svg style="left:1361.4px;top:35.2px" width="11.4" height="11.4" viewBox="0 0 13 13"><circle cx="6.3" cy="6.3" r="5.2" fill="none" stroke="#cfcfcf" stroke-width="1.3"/><path d="M2.6 10 A5.2 5.2 0 0 0 10 2.6 Z" fill="#cfcfcf"/></svg>
<div class="t" style="left:1386.00px;top:35.00px;font-family:'Liberation Serif','DejaVu Serif',serif;font-size:15px;font-weight:bold;color:#cfcfcf;">T</div>
<svg style="left:1409.8px;top:35.2px" width="11.6" height="11.8" viewBox="0 0 13 13"><rect x="2" y="2" width="9" height="9" fill="none" stroke="#d6d6d6" stroke-width="1.2"/><rect x="0.4" y="0.4" width="3" height="3" fill="#535353" stroke="#d6d6d6" stroke-width="0.8"/><rect x="9.6" y="0.4" width="3" height="3" fill="#535353" stroke="#d6d6d6" stroke-width="0.8"/><rect x="0.4" y="9.6" width="3" height="3" fill="#535353" stroke="#d6d6d6" stroke-width="0.8"/><rect x="9.6" y="9.6" width="3" height="3" fill="#535353" stroke="#d6d6d6" stroke-width="0.8"/></svg>
<div class="a" style="left:1179px;top:55px;width:252px;height:1px;background:#3f3f3f"></div>
<div class="a" style="left:1179px;top:56px;width:252px;height:1px;background:#5d5d5d"></div>
<div class="a" style="left:1183px;top:60px;width:187px;height:20px;background:linear-gradient(180deg,#6e6e6e 0%,#646464 50%,#5a5a5a 100%);border:1px solid #353535;border-radius:3px;box-sizing:border-box;box-shadow:0 1px 0 rgba(255,255,255,.10),inset 0 1px 0 rgba(255,255,255,.12)"></div>
<div class="t" style="left:1191.00px;top:65.00px;font-family:'Liberation Sans','DejaVu Sans',sans-serif;font-size:9.7px;color:#e6e6e6;transform-origin:0 0;transform:scaleX(1.0577);">Пропустить</div>
<svg style="left:1359px;top:65.5px" width="7" height="10" viewBox="0 0 7 10"><path d="M0.3 4 L3.5 0.4 L6.7 4 Z M0.3 6 L3.5 9.6 L6.7 6 Z" fill="#ededed"/></svg>
<div class="t" style="left:1376.00px;top:64.00px;font-family:'Liberation Sans','DejaVu Sans',sans-serif;font-size:9.7px;color:#e6e6e6;transform-origin:0 0;transform:scaleX(1.0581);">Непрозрачность:</div>
<div class="a" style="left:1179px;top:83px;width:252px;height:1px;background:#3f3f3f"></div>
<div class="a" style="left:1179px;top:84px;width:252px;height:1px;background:#5d5d5d"></div>
<div class="t" style="left:1185.00px;top:93.00px;font-family:'Liberation Sans','DejaVu Sans',sans-serif;font-size:9.7px;color:#e6e6e6;transform-origin:0 0;transform:scaleX(1.0429);">Закрепить:</div>
<svg style="left:1246px;top:93px" width="11" height="11" viewBox="0 0 11 11" shape-rendering="crispEdges"><rect width="11" height="11" fill="#7a7a7a"/><rect x="0" y="0" width="4" height="4" fill="#9a9a9a"/><rect x="7" y="0" width="4" height="4" fill="#9a9a9a"/><rect x="4" y="4" width="3" height="3" fill="#9a9a9a"/><rect x="0" y="7" width="4" height="4" fill="#9a9a9a"/><rect x="7" y="7" width="4" height="4" fill="#9a9a9a"/><rect x="4" y="0" width="3" height="4" fill="#6a6a6a"/><rect x="0" y="4" width="4" height="3" fill="#6a6a6a"/><rect x="7" y="4" width="4" height="3" fill="#6a6a6a"/><rect x="4" y="7" width="3" height="4" fill="#6a6a6a"/></svg>
<svg style="left:1265px;top:90px" width="18" height="15" viewBox="0 0 18 15"><path d="M16.6 0.6 L8 8.6 L9.6 10.2 Z" fill="#9a9a9a"/><path d="M7.4 9 Q4.6 8.6 3.8 11 Q3 13.2 0.8 13.4 Q5 15.4 8 12.8 Q9.6 11.2 9 10.4 Z" fill="#9a9a9a"/></svg>
<svg style="left:1289px;top:91px" width="14" height="14" viewBox="0 0 14 14" fill="none" stroke="#9c9c9c" stroke-width="1.1"><path d="M7 1 V13 M1 7 H13"/><path d="M5 3 L7 1 L9 3 M5 11 L7 13 L9 11 M3 5 L1 7 L3 9 M11 5 L13 7 L11 9"/></svg>
<svg style="left:1312px;top:91px" width="11" height="14" viewBox="0 0 11 14"><path d="M2.6 6 V4 A2.9 2.9 0 0 1 8.4 4 V6" fill="none" stroke="#d2d2d2" stroke-width="1.6"/><rect x="0.4" y="5.8" width="10.2" height="7.6" rx="0.8" fill="#d2d2d2"/><rect x="4.7" y="8" width="1.6" height="3" fill="#555"/></svg>
<div class="t" style="left:1415.00px;top:92.00px;font-family:'Liberation Sans','DejaVu Sans',sans-serif;font-size:9.7px;color:#e6e6e6;transform-origin:0 0;transform:scaleX(1.0582);">Заливка:</div>
<div class="a" style="left:1179px;top:113px;width:252px;height:1px;background:#3e3e3e"></div>
<div class="a" style="left:1179px;top:119px;width:252px;height:1px;background:#3e3e3e"></div>
<svg style="left:1187px;top:132.5px" width="14" height="12" viewBox="0 0 14 12"><path d="M0.8 6 Q7 -2.8 13.2 6 Q7 13.6 0.8 6 Z" fill="#c2c2c2"/><path d="M0.8 6 Q7 -2.8 13.2 6" fill="none" stroke="#444" stroke-width="0.8"/><circle cx="6.9" cy="5.6" r="2.7" fill="#3d3d3d"/><circle cx="7.9" cy="4.6" r="0.9" fill="#eee"/></svg>
<div class="a" style="left:1213px;top:129px;width:32px;height:21px;box-sizing:border-box;border:1px solid #0a0a0a;background-color:#fff;background-image:linear-gradient(45deg,#ccc 25%,transparent 25%,transparent 75%,#ccc 75%),linear-gradient(45deg,#ccc 25%,transparent 25%,transparent 75%,#ccc 75%);background-size:8px 8px;background-position:0 0,4px 4px"></div>
<div class="t" style="left:1255.30px;top:135.00px;font-family:'Liberation Sans','DejaVu Sans',sans-serif;font-size:9.7px;color:#e6e6e6;transform-origin:0 0;transform:scaleX(1.1984);">------</div>
<div class="a" style="left:1179px;top:158px;width:252px;height:1px;background:#3e3e3e"></div>
<div class="a" style="left:1188px;top:164px;width:12px;height:12px;box-sizing:border-box;background:rgba(0,0,0,.07);border:1px solid #3a3a3a;border-top-color:rgba(255,255,255,.12);border-left-color:rgba(255,255,255,.12)"></div>
<svg style="left:1214px;top:163px" width="29" height="14" viewBox="0 0 29 14"><defs><linearGradient id="fg" x1="0" y1="0" x2="0" y2="1"><stop offset="0" stop-color="#d2d2d2"/><stop offset="1" stop-color="#8c8c8c"/></linearGradient></defs><path d="M1 2.6 L7.2 7.4 L1 12.2 Z" fill="#ececec"/><path d="M13 1 H18.6 L19.6 3 H27.2 V13 H13 Z" fill="url(#fg)"/><rect x="19" y="2.4" width="8.2" height="1.1" fill="#2a2a2a"/></svg>
<div class="t" style="left:1254.20px;top:167.00px;font-family:'Liberation Sans','DejaVu Sans',sans-serif;font-size:9.7px;color:#e6e6e6;transform-origin:0 0;transform:scaleX(1.0714);">+ нажат</div>
<div class="a" style="left:1179px;top:181px;width:252px;height:1px;background:#3e3e3e"></div>
<div class="a" style="left:1188px;top:195px;width:12px;height:12px;box-sizing:border-box;background:rgba(0,0,0,.07);border:1px solid #3a3a3a;border-top-color:rgba(255,255,255,.12);border-left-color:rgba(255,255,255,.12)"></div>
<div class="a" style="left:1213px;top:191px;width:32px;height:21px;box-sizing:border-box;border:1px solid #0a0a0a;background-color:#fff;background-image:linear-gradient(45deg,#ccc 25%,transparent 25%,transparent 75%,#ccc 75%),linear-gradient(45deg,#ccc 25%,transparent 25%,transparent 75%,#ccc 75%);background-size:8px 8px;background-position:0 0,4px 4px"></div>
<div class="t" style="left:1255.30px;top:197.00px;font-family:'Liberation Sans','DejaVu Sans',sans-serif;font-size:9.7px;color:#e6e6e6;transform-origin:0 0;transform:scaleX(1.1984);">------</div>
<div class="a" style="left:1179px;top:220px;width:252px;height:1px;background:#3e3e3e"></div>
<div class="a" style="left:1188px;top:226px;width:12px;height:12px;box-sizing:border-box;background:rgba(0,0,0,.07);border:1px solid #3a3a3a;border-top-color:rgba(255,255,255,.12);border-left-color:rgba(255,255,255,.12)"></div>
<svg style="left:1214px;top:225px" width="29" height="14" viewBox="0 0 29 14"><defs><linearGradient id="fg" x1="0" y1="0" x2="0" y2="1"><stop offset="0" stop-color="#d2d2d2"/><stop offset="1" stop-color="#8c8c8c"/></linearGradient></defs><path d="M1 2.6 L7.2 7.4 L1 12.2 Z" fill="#ececec"/><path d="M13 1 H18.6 L19.6 3 H27.2 V13 H13 Z" fill="url(#fg)"/><rect x="19" y="2.4" width="8.2" height="1.1" fill="#2a2a2a"/></svg>
<div class="t" style="left:1254.20px;top:229.00px;font-family:'Liberation Sans','DejaVu Sans',sans-serif;font-size:9.7px;color:#e6e6e6;transform-origin:0 0;transform:scaleX(1.0209);">заметки</div>
<div class="a" style="left:1179px;top:243px;width:252px;height:1px;background:#3e3e3e"></div>
<svg style="left:1187px;top:256.5px" width="14" height="12" viewBox="0 0 14 12"><path d="M0.8 6 Q7 -2.8 13.2 6 Q7 13.6 0.8 6 Z" fill="#c2c2c2"/><path d="M0.8 6 Q7 -2.8 13.2 6" fill="none" stroke="#444" stroke-width="0.8"/><circle cx="6.9" cy="5.6" r="2.7" fill="#3d3d3d"/><circle cx="7.9" cy="4.6" r="0.9" fill="#eee"/></svg>
<div class="a" style="left:1213px;top:253px;width:32px;height:21px;box-sizing:border-box;border:1px solid #0a0a0a;background-color:#fff;background-image:linear-gradient(45deg,#ccc 25%,transparent 25%,transparent 75%,#ccc 75%),linear-gradient(45deg,#ccc 25%,transparent 25%,transparent 75%,#ccc 75%);background-size:8px 8px;background-position:0 0,4px 4px"></div>
<div class="t" style="left:1255.30px;top:259.00px;font-family:'Liberation Sans','DejaVu Sans',sans-serif;font-size:9.7px;color:#e6e6e6;transform-origin:0 0;transform:scaleX(1.1984);">------</div>
<div class="a" style="left:1179px;top:282px;width:252px;height:1px;background:#3e3e3e"></div>
<div class="a" style="left:1188px;top:288px;width:12px;height:12px;box-sizing:border-box;background:rgba(0,0,0,.07);border:1px solid #3a3a3a;border-top-color:rgba(255,255,255,.12);border-left-color:rgba(255,255,255,.12)"></div>
<svg style="left:1214px;top:287px" width="29" height="14" viewBox="0 0 29 14"><defs><linearGradient id="fg" x1="0" y1="0" x2="0" y2="1"><stop offset="0" stop-color="#d2d2d2"/><stop offset="1" stop-color="#8c8c8c"/></linearGradient></defs><path d="M1 2.6 L7.2 7.4 L1 12.2 Z" fill="#ececec"/><path d="M13 1 H18.6 L19.6 3 H27.2 V13 H13 Z" fill="url(#fg)"/><rect x="19" y="2.4" width="8.2" height="1.1" fill="#2a2a2a"/></svg>
<div class="t" style="left:1254.20px;top:291.00px;font-family:'Liberation Sans','DejaVu Sans',sans-serif;font-size:9.7px;color:#e6e6e6;transform-origin:0 0;transform:scaleX(1.0487);">карточки для запоминания</div>
<div class="a" style="left:1179px;top:305px;width:252px;height:1px;background:#3e3e3e"></div>
<div class="a" style="left:1188px;top:311px;width:12px;height:12px;box-sizing:border-box;background:rgba(0,0,0,.07);border:1px solid #3a3a3a;border-top-color:rgba(255,255,255,.12);border-left-color:rgba(255,255,255,.12)"></div>
<svg style="left:1214px;top:310px" width="29" height="14" viewBox="0 0 29 14"><defs><linearGradient id="fg" x1="0" y1="0" x2="0" y2="1"><stop offset="0" stop-color="#d2d2d2"/><stop offset="1" stop-color="#8c8c8c"/></linearGradient></defs><path d="M1 2.6 L7.2 7.4 L1 12.2 Z" fill="#ececec"/><path d="M13 1 H18.6 L19.6 3 H27.2 V13 H13 Z" fill="url(#fg)"/><rect x="19" y="2.4" width="8.2" height="1.1" fill="#2a2a2a"/></svg>
<div class="t" style="left:1254.20px;top:314.00px;font-family:'Liberation Sans','DejaVu Sans',sans-serif;font-size:9.7px;color:#e6e6e6;transform-origin:0 0;transform:scaleX(1.0349);">тестирование2</div>
<div class="a" style="left:1179px;top:328px;width:252px;height:1px;background:#3e3e3e"></div>
<div class="a" style="left:1188px;top:334px;width:12px;height:12px;box-sizing:border-box;background:rgba(0,0,0,.07);border:1px solid #3a3a3a;border-top-color:rgba(255,255,255,.12);border-left-color:rgba(255,255,255,.12)"></div>
<svg style="left:1214px;top:333px" width="29" height="14" viewBox="0 0 29 14"><defs><linearGradient id="fg" x1="0" y1="0" x2="0" y2="1"><stop offset="0" stop-color="#d2d2d2"/><stop offset="1" stop-color="#8c8c8c"/></linearGradient></defs><path d="M1 2.6 L7.2 7.4 L1 12.2 Z" fill="#ececec"/><path d="M13 1 H18.6 L19.6 3 H27.2 V13 H13 Z" fill="url(#fg)"/><rect x="19" y="2.4" width="8.2" height="1.1" fill="#2a2a2a"/></svg>
<div class="t" style="left:1254.20px;top:337.00px;font-family:'Liberation Sans','DejaVu Sans',sans-serif;font-size:9.7px;color:#e6e6e6;transform-origin:0 0;transform:scaleX(1.0465);">Выдержки в тексте</div>
<div class="a" style="left:1179px;top:351px;width:252px;height:1px;background:#3e3e3e"></div>
<div class="a" style="left:1188px;top:357px;width:12px;height:12px;box-sizing:border-box;background:rgba(0,0,0,.07);border:1px solid #3a3a3a;border-top-color:rgba(255,255,255,.12);border-left-color:rgba(255,255,255,.12)"></div>
<svg style="left:1214px;top:356px" width="29" height="14" viewBox="0 0 29 14"><defs><linearGradient id="fg" x1="0" y1="0" x2="0" y2="1"><stop offset="0" stop-color="#d2d2d2"/><stop offset="1" stop-color="#8c8c8c"/></linearGradient></defs><path d="M1 2.6 L7.2 7.4 L1 12.2 Z" fill="#ececec"/><path d="M13 1 H18.6 L19.6 3 H27.2 V13 H13 Z" fill="url(#fg)"/><rect x="19" y="2.4" width="8.2" height="1.1" fill="#2a2a2a"/></svg>
<div class="t" style="left:1254.20px;top:360.00px;font-family:'Liberation Sans','DejaVu Sans',sans-serif;font-size:9.7px;color:#e6e6e6;transform-origin:0 0;transform:scaleX(1.0387);">выдержки</div>
<div class="a" style="left:1179px;top:374px;width:252px;height:1px;background:#3e3e3e"></div>
<div class="a" style="left:1188px;top:380px;width:12px;height:12px;box-sizing:border-box;background:rgba(0,0,0,.07);border:1px solid #3a3a3a;border-top-color:rgba(255,255,255,.12);border-left-color:rgba(255,255,255,.12)"></div>
<svg style="left:1214px;top:379px" width="29" height="14" viewBox="0 0 29 14"><defs><linearGradient id="fg" x1="0" y1="0" x2="0" y2="1"><stop offset="0" stop-color="#d2d2d2"/><stop offset="1" stop-color="#8c8c8c"/></linearGradient></defs><path d="M1 2.6 L7.2 7.4 L1 12.2 Z" fill="#ececec"/><path d="M13 1 H18.6 L19.6 3 H27.2 V13 H13 Z" fill="url(#fg)"/><rect x="19" y="2.4" width="8.2" height="1.1" fill="#2a2a2a"/></svg>
<div class="t" style="left:1254.20px;top:383.00px;font-family:'Liberation Sans','DejaVu Sans',sans-serif;font-size:9.7px;color:#e6e6e6;transform-origin:0 0;transform:scaleX(1.0128);">комментарии</div>
<div class="a" style="left:1179px;top:397px;width:252px;height:1px;background:#3e3e3e"></div>
<div class="a" style="left:1188px;top:403px;width:12px;height:12px;box-sizing:border-box;background:rgba(0,0,0,.07);border:1px solid #3a3a3a;border-top-color:rgba(255,255,255,.12);border-left-color:rgba(255,255,255,.12)"></div>
<svg style="left:1214px;top:402px" width="29" height="14" viewBox="0 0 29 14"><defs><linearGradient id="fg" x1="0" y1="0" x2="0" y2="1"><stop offset="0" stop-color="#d2d2d2"/><stop offset="1" stop-color="#8c8c8c"/></linearGradient></defs><path d="M1 2.6 L7.2 7.4 L1 12.2 Z" fill="#ececec"/><path d="M13 1 H18.6 L19.6 3 H27.2 V13 H13 Z" fill="url(#fg)"/><rect x="19" y="2.4" width="8.2" height="1.1" fill="#2a2a2a"/></svg>
<div class="t" style="left:1254.20px;top:406.00px;font-family:'Liberation Sans','DejaVu Sans',sans-serif;font-size:9.7px;color:#e6e6e6;transform-origin:0 0;transform:scaleX(1.0877);">картотека / п.у.</div>
<div class="a" style="left:1179px;top:420px;width:252px;height:1px;background:#3e3e3e"></div>
<div class="a" style="left:1188px;top:426px;width:12px;height:12px;box-sizing:border-box;background:rgba(0,0,0,.07);border:1px solid #3a3a3a;border-top-color:rgba(255,255,255,.12);border-left-color:rgba(255,255,255,.12)"></div>
<svg style="left:1214px;top:425px" width="29" height="14" viewBox="0 0 29 14"><defs><linearGradient id="fg" x1="0" y1="0" x2="0" y2="1"><stop offset="0" stop-color="#d2d2d2"/><stop offset="1" stop-color="#8c8c8c"/></linearGradient></defs><path d="M1 2.6 L7.2 7.4 L1 12.2 Z" fill="#ececec"/><path d="M13 1 H18.6 L19.6 3 H27.2 V13 H13 Z" fill="url(#fg)"/><rect x="19" y="2.4" width="8.2" height="1.1" fill="#2a2a2a"/></svg>
<div class="t" style="left:1254.20px;top:429.00px;font-family:'Liberation Sans','DejaVu Sans',sans-serif;font-size:9.7px;color:#e6e6e6;transform-origin:0 0;transform:scaleX(1.0603);">кросс-ссылки</div>
<div class="a" style="left:1179px;top:443px;width:252px;height:1px;background:#3e3e3e"></div>
<div class="a" style="left:1188px;top:449px;width:12px;height:12px;box-sizing:border-box;background:rgba(0,0,0,.07);border:1px solid #3a3a3a;border-top-color:rgba(255,255,255,.12);border-left-color:rgba(255,255,255,.12)"></div>
<svg style="left:1214px;top:448px" width="29" height="14" viewBox="0 0 29 14"><defs><linearGradient id="fg" x1="0" y1="0" x2="0" y2="1"><stop offset="0" stop-color="#d2d2d2"/><stop offset="1" stop-color="#8c8c8c"/></linearGradient></defs><path d="M1 2.6 L7.2 7.4 L1 12.2 Z" fill="#ececec"/><path d="M13 1 H18.6 L19.6 3 H27.2 V13 H13 Z" fill="url(#fg)"/><rect x="19" y="2.4" width="8.2" height="1.1" fill="#2a2a2a"/></svg>
<div class="t" style="left:1254.20px;top:452.00px;font-family:'Liberation Sans','DejaVu Sans',sans-serif;font-size:9.7px;color:#e6e6e6;transform-origin:0 0;transform:scaleX(1.0307);">mind-map</div>
<div class="a" style="left:1179px;top:466px;width:252px;height:1px;background:#3e3e3e"></div>
<div class="a" style="left:1188px;top:472px;width:12px;height:12px;box-sizing:border-box;background:rgba(0,0,0,.07);border:1px solid #3a3a3a;border-top-color:rgba(255,255,255,.12);border-left-color:rgba(255,255,255,.12)"></div>
<svg style="left:1214px;top:471px" width="29" height="14" viewBox="0 0 29 14"><defs><linearGradient id="fg" x1="0" y1="0" x2="0" y2="1"><stop offset="0" stop-color="#d2d2d2"/><stop offset="1" stop-color="#8c8c8c"/></linearGradient></defs><path d="M1 2.6 L7.2 7.4 L1 12.2 Z" fill="#ececec"/><path d="M13 1 H18.6 L19.6 3 H27.2 V13 H13 Z" fill="url(#fg)"/><rect x="19" y="2.4" width="8.2" height="1.1" fill="#2a2a2a"/></svg>
<div class="t" style="left:1254.20px;top:475.00px;font-family:'Liberation Sans','DejaVu Sans',sans-serif;font-size:9.7px;color:#e6e6e6;transform-origin:0 0;transform:scaleX(1.0606);">конспект с записью</div>
<div class="a" style="left:1179px;top:489px;width:252px;height:1px;background:#3e3e3e"></div>
<div class="a" style="left:1188px;top:495px;width:12px;height:12px;box-sizing:border-box;background:rgba(0,0,0,.07);border:1px solid #3a3a3a;border-top-color:rgba(255,255,255,.12);border-left-color:rgba(255,255,255,.12)"></div>
<svg style="left:1214px;top:494px" width="29" height="14" viewBox="0 0 29 14"><defs><linearGradient id="fg" x1="0" y1="0" x2="0" y2="1"><stop offset="0" stop-color="#d2d2d2"/><stop offset="1" stop-color="#8c8c8c"/></linearGradient></defs><path d="M1 2.6 L7.2 7.4 L1 12.2 Z" fill="#ececec"/><path d="M13 1 H18.6 L19.6 3 H27.2 V13 H13 Z" fill="url(#fg)"/><rect x="19" y="2.4" width="8.2" height="1.1" fill="#2a2a2a"/></svg>
<div class="t" style="left:1254.20px;top:498.00px;font-family:'Liberation Sans','DejaVu Sans',sans-serif;font-size:9.7px;color:#e6e6e6;transform-origin:0 0;transform:scaleX(1.0620);">конспект</div>
<div class="a" style="left:1179px;top:512px;width:252px;height:1px;background:#3e3e3e"></div>
<svg style="left:1187px;top:525.5px" width="14" height="12" viewBox="0 0 14 12"><path d="M0.8 6 Q7 -2.8 13.2 6 Q7 13.6 0.8 6 Z" fill="#c2c2c2"/><path d="M0.8 6 Q7 -2.8 13.2 6" fill="none" stroke="#444" stroke-width="0.8"/><circle cx="6.9" cy="5.6" r="2.7" fill="#3d3d3d"/><circle cx="7.9" cy="4.6" r="0.9" fill="#eee"/></svg>
<div class="a" style="left:1213px;top:528px;width:32px;height:9px;box-sizing:border-box;border:1px solid #222;background:#efeee4;background-image:linear-gradient(90deg,transparent 3px,#b8a8c8 3px,#b8a8c8 8px,transparent 8px,transparent 10px,#a9b3c8 10px,#a9b3c8 17px,transparent 17px,transparent 19px,#c2b4a4 19px,#c2b4a4 26px,transparent 26px);background-size:100% 2px;background-repeat:no-repeat;background-position:0 3px"></div>
<div class="a" style="left:1260px;top:522px;width:32px;height:21px;background:#000"></div>
<div class="a" style="left:1263px;top:525px;width:3px;height:1px;background:#fff"></div>
<div class="t" style="left:1302.00px;top:529.00px;font-family:'Liberation Sans','DejaVu Sans',sans-serif;font-size:9.7px;color:#e6e6e6;transform-origin:0 0;transform:scaleX(1.0439);">Библиотека</div>
<div class="a" style="left:1179px;top:551px;width:252px;height:1px;background:#3e3e3e"></div>
<svg style="left:1187px;top:564.5px" width="14" height="12" viewBox="0 0 14 12"><path d="M0.8 6 Q7 -2.8 13.2 6 Q7 13.6 0.8 6 Z" fill="#c2c2c2"/><path d="M0.8 6 Q7 -2.8 13.2 6" fill="none" stroke="#444" stroke-width="0.8"/><circle cx="6.9" cy="5.6" r="2.7" fill="#3d3d3d"/><circle cx="7.9" cy="4.6" r="0.9" fill="#eee"/></svg>
<div class="a" style="left:1213px;top:555px;width:28px;height:31px;box-sizing:border-box;border:1px solid #0a0a0a;background:#f3f3f3"></div>
<div class="a" style="left:1218px;top:569.3px;width:17px;height:3.3px;background:#bcbcbc"></div>
<div class="a" style="left:1224.9px;top:560.6px;width:3.3px;height:20.6px;background:#bcbcbc"></div>
<div class="t" style="left:1251.80px;top:568.00px;font-family:'Liberation Sans','DejaVu Sans',sans-serif;font-size:9.7px;color:#e6e6e6;transform-origin:0 0;transform:scaleX(1.0446);">+ со скриншота новый</div>
<div class="a" style="left:1179px;top:591px;width:30px;height:22px;background:#6b6b6b"></div>
<div class="a" style="left:1179px;top:590px;width:252px;height:1px;background:#3e3e3e"></div>
<div class="a" style="left:1188px;top:596px;width:12px;height:12px;box-sizing:border-box;background:rgba(0,0,0,.07);border:1px solid #3a3a3a;border-top-color:rgba(255,255,255,.12);border-left-color:rgba(255,255,255,.12)"></div>
<svg style="left:1214px;top:595px" width="29" height="14" viewBox="0 0 29 14"><defs><linearGradient id="fg" x1="0" y1="0" x2="0" y2="1"><stop offset="0" stop-color="#d2d2d2"/><stop offset="1" stop-color="#8c8c8c"/></linearGradient></defs><path d="M1 2.6 L7.2 7.4 L1 12.2 Z" fill="#ececec"/><path d="M13 1 H18.6 L19.6 3 H27.2 V13 H13 Z" fill="url(#fg)"/><rect x="19" y="2.4" width="8.2" height="1.1" fill="#2a2a2a"/></svg>
<div class="t" style="left:1254.20px;top:599.00px;font-family:'Liberation Sans','DejaVu Sans',sans-serif;font-size:9.7px;color:#e6e6e6;transform-origin:0 0;transform:scaleX(1.0653);">одна книга</div>
<div class="a" style="left:1179px;top:613px;width:252px;height:1px;background:#3e3e3e"></div>
<div class="a" style="left:1188px;top:627px;width:12px;height:12px;box-sizing:border-box;background:rgba(0,0,0,.07);border:1px solid #3a3a3a;border-top-color:rgba(255,255,255,.12);border-left-color:rgba(255,255,255,.12)"></div>
<div class="a" style="left:1213px;top:623px;width:32px;height:21px;box-sizing:border-box;border:1px solid #0a0a0a;background-color:#fff;background-image:linear-gradient(45deg,#ccc 25%,transparent 25%,transparent 75%,#ccc 75%),linear-gradient(45deg,#ccc 25%,transparent 25%,transparent 75%,#ccc 75%);background-size:8px 8px;background-position:0 0,4px 4px"></div>
<div class="t" style="left:1255.30px;top:629.00px;font-family:'Liberation Sans','DejaVu Sans',sans-serif;font-size:9.7px;color:#e6e6e6;transform-origin:0 0;transform:scaleX(1.1984);">------</div>
<div class="a" style="left:1179px;top:652px;width:252px;height:1px;background:#3e3e3e"></div>
<div class="a" style="left:1188px;top:658px;width:12px;height:12px;box-sizing:border-box;background:rgba(0,0,0,.07);border:1px solid #3a3a3a;border-top-color:rgba(255,255,255,.12);border-left-color:rgba(255,255,255,.12)"></div>
<svg style="left:1214px;top:657px" width="29" height="14" viewBox="0 0 29 14"><defs><linearGradient id="fg" x1="0" y1="0" x2="0" y2="1"><stop offset="0" stop-color="#d2d2d2"/><stop offset="1" stop-color="#8c8c8c"/></linearGradient></defs><path d="M1 2.6 L7.2 7.4 L1 12.2 Z" fill="#ececec"/><path d="M13 1 H18.6 L19.6 3 H27.2 V13 H13 Z" fill="url(#fg)"/><rect x="19" y="2.4" width="8.2" height="1.1" fill="#2a2a2a"/></svg>
<div class="t" style="left:1254.20px;top:661.00px;font-family:'Liberation Sans','DejaVu Sans',sans-serif;font-size:9.7px;color:#e6e6e6;transform-origin:0 0;transform:scaleX(1.0587);">залипушки развернутые</div>
<div class="a" style="left:1179px;top:676px;width:30px;height:22px;background:#6b6b6b"></div>
<div class="a" style="left:1179px;top:675px;width:252px;height:1px;background:#3e3e3e"></div>
<div class="a" style="left:1188px;top:681px;width:12px;height:12px;box-sizing:border-box;background:rgba(0,0,0,.07);border:1px solid #3a3a3a;border-top-color:rgba(255,255,255,.12);border-left-color:rgba(255,255,255,.12)"></div>
<svg style="left:1214px;top:680px" width="29" height="14" viewBox="0 0 29 14"><defs><linearGradient id="fg" x1="0" y1="0" x2="0" y2="1"><stop offset="0" stop-color="#d2d2d2"/><stop offset="1" stop-color="#8c8c8c"/></linearGradient></defs><path d="M1 2.6 L7.2 7.4 L1 12.2 Z" fill="#ececec"/><path d="M13 1 H18.6 L19.6 3 H27.2 V13 H13 Z" fill="url(#fg)"/><rect x="19" y="2.4" width="8.2" height="1.1" fill="#2a2a2a"/></svg>
<div class="t" style="left:1254.20px;top:684.00px;font-family:'Liberation Sans','DejaVu Sans',sans-serif;font-size:9.7px;color:#e6e6e6;transform-origin:0 0;transform:scaleX(1.0554);">залипушки свернутые</div>
<div class="a" style="left:1179px;top:699px;width:30px;height:22px;background:#6b6b6b"></div>
<div class="a" style="left:1210px;top:699px;width:221px;height:22px;background:#5a6679"></div>
<div class="a" style="left:1179px;top:698px;width:252px;height:1px;background:#3e3e3e"></div>
<svg style="left:1187px;top:703.5px" width="14" height="12" viewBox="0 0 14 12"><path d="M0.8 6 Q7 -2.8 13.2 6 Q7 13.6 0.8 6 Z" fill="#c2c2c2"/><path d="M0.8 6 Q7 -2.8 13.2 6" fill="none" stroke="#444" stroke-width="0.8"/><circle cx="6.9" cy="5.6" r="2.7" fill="#3d3d3d"/><circle cx="7.9" cy="4.6" r="0.9" fill="#eee"/></svg>
<svg style="left:1214px;top:703px" width="29" height="14" viewBox="0 0 29 14"><defs><linearGradient id="fg" x1="0" y1="0" x2="0" y2="1"><stop offset="0" stop-color="#d2d2d2"/><stop offset="1" stop-color="#8c8c8c"/></linearGradient></defs><path d="M1 2.6 L7.2 7.4 L1 12.2 Z" fill="#ececec"/><path d="M13 1 H18.6 L19.6 3 H27.2 V13 H13 Z" fill="url(#fg)"/><rect x="19" y="2.4" width="8.2" height="1.1" fill="#2a2a2a"/></svg>
<div class="t" style="left:1254.20px;top:707.00px;font-family:'Liberation Sans','DejaVu Sans',sans-serif;font-size:9.7px;color:#e6e6e6;transform-origin:0 0;transform:scaleX(1.0394);">тестирование</div>
<div class="a" style="left:1179px;top:722px;width:30px;height:22px;background:#6b6b6b"></div>
<div class="a" style="left:1179px;top:721px;width:252px;height:1px;background:#3e3e3e"></div>
<div class="a" style="left:1188px;top:727px;width:12px;height:12px;box-sizing:border-box;background:rgba(0,0,0,.07);border:1px solid #3a3a3a;border-top-color:rgba(255,255,255,.12);border-left-color:rgba(255,255,255,.12)"></div>
<svg style="left:1214px;top:726px" width="29" height="14" viewBox="0 0 29 14"><defs><linearGradient id="fg" x1="0" y1="0" x2="0" y2="1"><stop offset="0" stop-color="#d2d2d2"/><stop offset="1" stop-color="#8c8c8c"/></linearGradient></defs><path d="M1 2.6 L7.2 7.4 L1 12.2 Z" fill="#ececec"/><path d="M13 1 H18.6 L19.6 3 H27.2 V13 H13 Z" fill="url(#fg)"/><rect x="19" y="2.4" width="8.2" height="1.1" fill="#2a2a2a"/></svg>
<div class="t" style="left:1254.20px;top:730.00px;font-family:'Liberation Sans','DejaVu Sans',sans-serif;font-size:9.7px;color:#e6e6e6;transform-origin:0 0;transform:scaleX(1.0486);">много книг - см 2</div>
<div class="a" style="left:1179px;top:745px;width:30px;height:15px;background:#6b6b6b"></div>
<div class="a" style="left:1179px;top:744px;width:252px;height:1px;background:#3e3e3e"></div>
<div class="a" style="left:1209px;top:113px;width:1px;height:635px;background:#3e3e3e"></div>
<svg style="left:1356.5px;top:717.5px" width="18" height="18" viewBox="0 0 18 18"><defs><linearGradient id="hg" x1="0" y1="0" x2="1" y2="1"><stop offset="0.55" stop-color="#fff"/><stop offset="1" stop-color="#bdbdbd"/></linearGradient></defs><path d="M5.8 10.6 V2.3 Q5.8 0.6 7.6 0.6 Q9.4 0.6 9.4 2.3 V5.8 Q10.4 5 11.6 5.6 Q12.2 5.9 12.2 6.8 Q13.2 6.2 14.2 6.9 Q14.7 7.3 14.7 8 Q15.6 7.7 16.3 8.3 Q16.9 8.9 16.8 10 L16.4 12.4 L14.6 17.3 H6.4 L5.4 15.6 L1 10.8 Q0.4 9.6 1.6 8.7 Q2.6 8.2 3.6 9 Z" fill="url(#hg)" stroke="#0a0a0a" stroke-width="1.15" stroke-linejoin="round"/><path d="M9.4 6 V9 M12.2 7 V9.4 M14.7 8.2 V10" stroke="#0a0a0a" stroke-width="0.9"/></svg>
</body></html>
